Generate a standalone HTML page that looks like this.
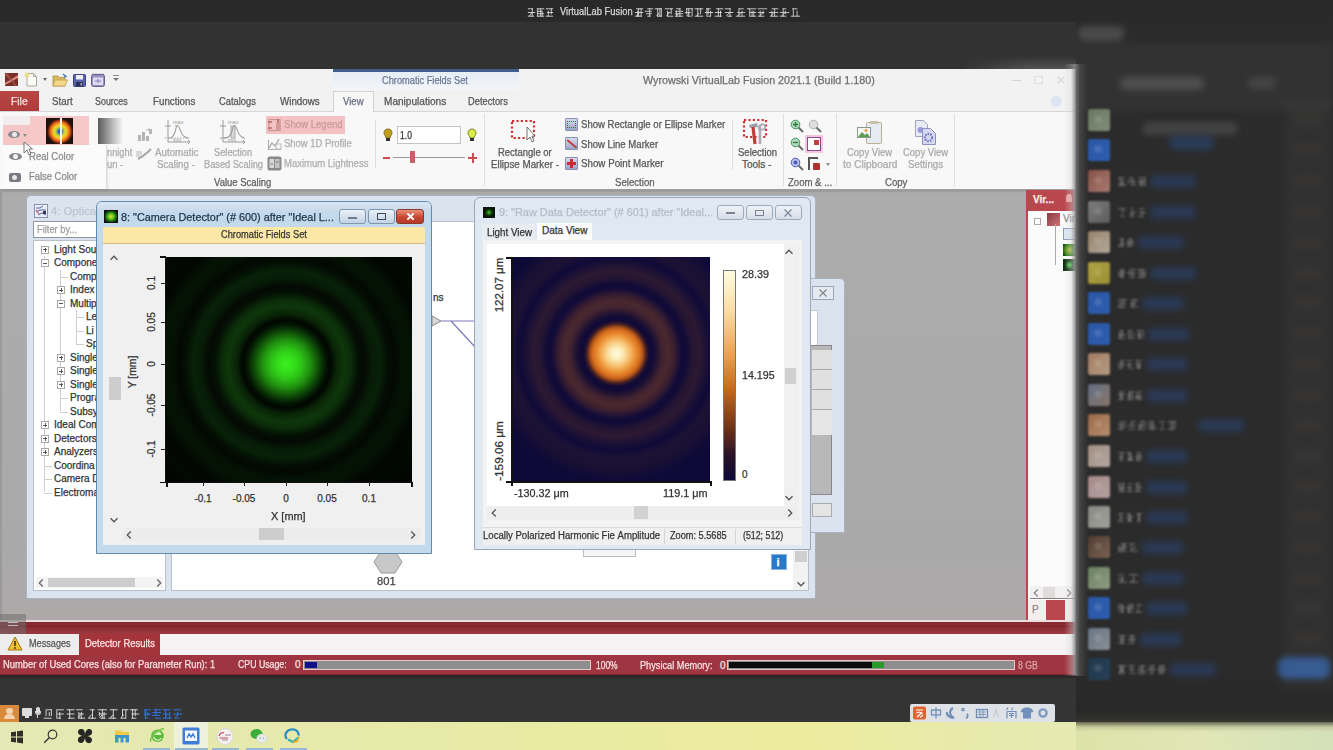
<!DOCTYPE html>
<html><head><meta charset="utf-8">
<style>
*{margin:0;padding:0;box-sizing:border-box}
html,body{width:1333px;height:750px;overflow:hidden;background:#2a2a2a;font-family:"Liberation Sans",sans-serif}
body{position:relative}
.a{position:absolute}
.t{position:absolute;white-space:nowrap;transform-origin:0 50%;-webkit-text-stroke-width:0.25px}
.rot{transform-origin:50% 50%;transform:translate(-50%,-50%) rotate(-90deg)}
</style></head><body>
<div class="a" style="left:0px;top:0px;width:1333px;height:22px;background:#292929"></div>
<div class="a" style="left:0px;top:22px;width:1333px;height:48px;background:#323232"></div>
<svg class="a" style="left:527px;top:7.5px" width="28" height="9" viewBox="0 0 28 9"><path d="M0.8 0.8H6.0M0.8 4.5H8.2M0.8 8.2H7.1M5.3 0.3V8.7M2.3 8.1L4.5 5.0M9.8 0.8H17.2M9.8 3.3H15.0M9.8 5.7H17.2M9.8 8.2H17.2M10.7 0.3V8.7M13.6 0.3V8.7M15.2 2.7V8.7M18.8 0.8H26.2M19.9 4.5H26.2M18.8 8.2H26.2M21.3 2.7V8.7M24.3 0.3V6.3" fill="none" stroke="rgba(225,225,225,0.85)" stroke-width="1.0"/></svg>
<div class="t" style="transform:scaleX(0.936);left:560px;top:6.0px;font-size:10px;line-height:12px;color:#d6d6d6;font-weight:normal;">VirtualLab Fusion</div>
<svg class="a" style="left:634px;top:7.5px" width="101" height="9" viewBox="0 0 101 9"><path d="M2.1 0.8H9.2M0.8 4.5H9.2M0.8 8.2H7.9M3.7 2.7V8.7M4.6 0.3V8.7M7.1 0.3V8.7M2.5 8.1L5.0 5.0M13.3 0.8H19.2M10.8 3.3H17.9M12.1 5.7H17.9M13.3 8.2H16.7M15.7 0.3V8.7M20.8 0.8H27.9M23.3 8.2H27.9M23.7 0.3V8.7M25.9 0.3V8.7M27.3 0.3V8.7M22.5 8.1L25.0 5.0M30.8 0.8H39.2M33.3 4.5H36.7M33.3 8.2H39.2M33.5 2.7V8.7M37.2 0.3V6.3M32.5 8.1L35.0 5.0M42.1 0.8H46.7M40.8 3.3H49.2M40.8 5.7H49.2M40.8 8.2H49.2M42.6 2.7V8.7M45.9 0.3V8.7M42.5 8.1L45.0 5.0M52.1 0.8H59.2M50.8 4.5H56.7M53.3 8.2H56.7M52.7 0.3V6.3M54.8 0.3V8.7M58.1 0.3V8.7M52.5 8.1L55.0 5.0M60.8 0.8H69.2M60.8 8.2H69.2M63.8 0.3V8.7M66.6 0.3V6.3M62.5 8.1L65.0 5.0M72.1 0.8H76.7M70.8 4.5H79.2M73.3 8.2H76.7M72.9 0.3V8.7M74.2 0.3V6.3M76.6 2.7V8.7M82.1 0.8H89.2M80.8 4.5H87.9M80.8 8.2H87.9M84.4 0.3V8.7M86.5 2.7V8.7M90.8 0.8H96.7M90.8 4.5H99.2M93.3 8.2H97.9M96.0 0.3V8.7M92.5 8.1L95.0 5.0" fill="none" stroke="rgba(225,225,225,0.85)" stroke-width="1.0"/></svg>
<svg class="a" style="left:735px;top:7.5px" width="67" height="9" viewBox="0 0 67 9"><path d="M3.6 0.8H8.8M2.2 4.5H10.2M0.8 8.2H10.2M3.9 0.3V8.7M7.0 2.7V8.7M2.7 8.1L5.5 5.0M11.8 0.8H21.2M14.6 4.5H21.2M14.6 8.2H21.2M14.7 0.3V8.7M17.1 2.7V8.7M18.8 2.7V8.7M22.8 0.8H32.2M22.8 4.5H29.4M22.8 8.2H29.4M25.2 2.7V8.7M28.1 2.7V6.3M24.7 8.1L27.5 5.0M36.6 0.8H43.2M33.8 4.5H43.2M35.2 8.2H43.2M36.9 2.7V8.7M39.6 0.3V8.7M35.7 8.1L38.5 5.0M47.6 0.8H51.4M44.8 4.5H54.2M44.8 8.2H51.4M48.2 0.3V8.7M50.3 2.7V6.3M46.7 8.1L49.5 5.0M57.2 0.8H62.4M55.8 8.2H65.2M58.3 0.3V8.7M62.1 2.7V8.7" fill="none" stroke="rgba(225,225,225,0.8)" stroke-width="1.0"/></svg>
<div class="a" style="left:0px;top:69px;width:1076px;height:42px;background:#f2f2f2"></div>
<div class="a" style="left:0px;top:111px;width:1076px;height:1px;background:#d6d6d6"></div>
<div class="a" style="left:0px;top:112px;width:1076px;height:77px;background:#f8f8f8"></div>
<div class="a" style="left:0px;top:189px;width:1076px;height:431px;background:linear-gradient(#adacad,#aaa9aa 85%,#afa9a9)"></div>
<div class="a" style="left:0px;top:189px;width:1076px;height:3px;background:#9c9c9c"></div>
<div class="a" style="left:0px;top:192px;width:1076px;height:2px;background:#a9a9a9"></div>
<div class="a" style="left:0px;top:189px;width:2px;height:431px;background:#9a9a9a"></div>
<svg class="a" style="left:5px;top:73px" width="13" height="13" viewBox="0 0 13 13"><rect width="13" height="13" fill="#7a3028"/><path d="M0 10 C4 8 8 5 13 2 L13 5 C9 7 5 9 0 12 Z" fill="#d89080"/><path d="M2 0 C5 4 8 8 12 13 L10 13 C7 9 4 5 0 2 Z" fill="#b05a4c" opacity="0.8"/></svg>
<svg class="a" style="left:24px;top:72px" width="14" height="15" viewBox="0 0 14 15"><path d="M3 1.5 H9.5 L12.5 4.5 V14 H3 Z" fill="#fdfdf8" stroke="#a8a8a0"/><path d="M9.5 1.5 V4.5 H12.5" fill="none" stroke="#a8a8a0"/><circle cx="3" cy="3" r="2.5" fill="#f0dc80" opacity="0.85"/></svg>
<div class="a" style="left:43px;top:78px;width:0;height:0;border-left:2.5px solid transparent;border-right:2.5px solid transparent;border-top:3px solid #666"></div>
<svg class="a" style="left:52px;top:73px" width="16" height="14" viewBox="0 0 16 14"><path d="M1 3 H6 L7.5 4.5 H13 V13 H1 Z" fill="#d8b860" stroke="#b09040" stroke-width="0.8"/><path d="M3 7 H15.5 L13 13 H1 Z" fill="#f2d888" stroke="#c0a050" stroke-width="0.8"/><path d="M11 1 L14 3.5 L12 4" fill="none" stroke="#3a70b0" stroke-width="1.2"/></svg>
<svg class="a" style="left:73px;top:74px" width="13" height="13" viewBox="0 0 13 13"><rect x="0.5" y="0.5" width="12" height="12" rx="1" fill="#5a62a8" stroke="#3a4080"/><rect x="3" y="1" width="7" height="4.5" fill="#eef0f8"/><rect x="3" y="8" width="7" height="4.5" fill="#2a3060"/><rect x="7.5" y="9" width="1.5" height="2.5" fill="#aab"/></svg>
<svg class="a" style="left:91px;top:73px" width="14" height="14" viewBox="0 0 14 14"><rect x="0.5" y="1.5" width="13" height="12" rx="2" fill="#9890c0" stroke="#6a6090"/><rect x="2" y="4.5" width="10" height="7.5" fill="#dcdcf0"/><path d="M2 2 V0.5 M5 2 V0.5 M9 2 V0.5 M12 2 V0.5" stroke="#6a6090"/><path d="M4 8 H10 M7 6 V10" stroke="#8a80b8" stroke-width="1.2"/></svg>
<div class="a" style="left:113px;top:78px;width:0;height:0;border-left:3px solid transparent;border-right:3px solid transparent;border-top:3px solid #777"></div>
<div class="a" style="left:113px;top:75px;width:6px;height:1px;background:#888"></div>
<div class="a" style="left:333px;top:69px;width:186px;height:21px;background:linear-gradient(#e4ebf4,#f3f6fa)"></div>
<div class="a" style="left:333px;top:69px;width:186px;height:3px;background:#415d8c"></div>
<div class="t" style="transform:scaleX(0.925);left:382px;top:75.0px;font-size:10px;line-height:12px;color:#6a7894;font-weight:normal;">Chromatic Fields Set</div>
<div class="t" style="transform:scaleX(1.022);left:643px;top:73.5px;font-size:10.5px;line-height:13px;color:#6e6e6e;font-weight:normal;">Wyrowski VirtualLab Fusion 2021.1 (Build 1.180)</div>
<div class="a" style="left:1012px;top:80px;width:9px;height:1px;background:#d6d6d6"></div>
<div class="a" style="left:1034px;top:76px;width:9px;height:8px;border:1px solid #dedede"></div>
<svg class="a" style="left:1056px;top:75px" width="10" height="10" viewBox="-5 -5 10 10"><path d="M-3.5 -3.5 L3.5 3.5 M3.5 -3.5 L-3.5 3.5" stroke="#d8d8d8" stroke-width="1.1"/></svg>
<div class="a" style="left:1051px;top:96px;width:11px;height:11px;border-radius:50%;background:#dde5f2"></div>
<div class="a" style="left:0px;top:91px;width:39px;height:20px;background:linear-gradient(#b84644,#ae3c3b)"></div>
<div class="t" style="transform:scaleX(1.031);left:11px;top:95.5px;font-size:10px;line-height:12px;color:#fbe0e0;font-weight:normal;">File</div>
<div class="t" style="transform:scaleX(0.976);left:52px;top:95.5px;font-size:10px;line-height:12px;color:#555;font-weight:normal;">Start</div>
<div class="t" style="transform:scaleX(0.892);left:95px;top:95.5px;font-size:10px;line-height:12px;color:#555;font-weight:normal;">Sources</div>
<div class="t" style="transform:scaleX(0.977);left:152.5px;top:95.5px;font-size:10px;line-height:12px;color:#555;font-weight:normal;">Functions</div>
<div class="t" style="transform:scaleX(0.936);left:219px;top:95.5px;font-size:10px;line-height:12px;color:#555;font-weight:normal;">Catalogs</div>
<div class="t" style="transform:scaleX(0.976);left:280px;top:95.5px;font-size:10px;line-height:12px;color:#555;font-weight:normal;">Windows</div>
<div class="a" style="left:333px;top:91px;width:41px;height:21px;background:#f8f8f8;border:1px solid #d2d2d2;border-bottom:none"></div>
<div class="t" style="transform:scaleX(0.955);left:342.5px;top:95.5px;font-size:10px;line-height:12px;color:#6a6f86;font-weight:normal;">View</div>
<div class="t" style="transform:scaleX(1.008);left:384px;top:95.5px;font-size:10px;line-height:12px;color:#555;font-weight:normal;">Manipulations</div>
<div class="t" style="transform:scaleX(0.930);left:467.5px;top:95.5px;font-size:10px;line-height:12px;color:#555;font-weight:normal;">Detectors</div>
<div class="a" style="left:375px;top:120px;width:1px;height:48px;background:#dedede"></div>
<div class="a" style="left:484px;top:114px;width:1px;height:72px;background:#dedede"></div>
<div class="a" style="left:732px;top:120px;width:1px;height:50px;background:#dedede"></div>
<div class="a" style="left:783px;top:114px;width:1px;height:72px;background:#dedede"></div>
<div class="a" style="left:836px;top:114px;width:1px;height:72px;background:#dedede"></div>
<div class="a" style="left:954px;top:114px;width:1px;height:72px;background:#dedede"></div>
<div class="a" style="left:3px;top:116px;width:27px;height:9px;background:#f3eded"></div>
<div class="a" style="left:3px;top:125px;width:27px;height:20px;background:#f5c6c6"></div>
<div class="a" style="left:30px;top:116px;width:59px;height:29px;background:#f6c9c9"></div>
<div class="a" style="left:8px;top:131px;width:12px;height:7px;border-radius:50%;background:#8a8a92"></div>
<div class="a" style="left:12px;top:132px;width:5px;height:5px;border-radius:50%;background:#f0e8ec"></div>
<div class="a" style="left:23px;top:134px;width:0;height:0;border-left:2.5px solid transparent;border-right:2.5px solid transparent;border-top:3px solid #888"></div>
<div class="a" style="left:46px;top:118px;width:27px;height:26px;background:radial-gradient(circle at 14px 13.5px,#2838a8 0,#3a70c0 2px,#a8cc48 4px,#f0d828 6px,#f4a020 8px,#d85a14 10px,#7a2810 11.5px,#1e1210 13px)"><div class="a" style="left:14px;top:0;width:1.5px;height:26px;background:#f4f0ee"></div></div>
<div class="a" style="left:3px;top:145px;width:104px;height:44px;background:#fbfbfb;border-right:1px solid #dcdcdc;box-shadow:1px 1px 2px rgba(0,0,0,0.08)"></div>
<div class="a" style="left:9px;top:153px;width:13px;height:7px;border-radius:50%;background:#85858d"></div>
<div class="a" style="left:13px;top:154px;width:5px;height:5px;border-radius:50%;background:#f3f3f3"></div>
<div class="t" style="transform:scaleX(0.957);left:29px;top:150.5px;font-size:10px;line-height:12px;color:#8a8a8a;font-weight:normal;">Real Color</div>
<div class="a" style="left:9px;top:173px;width:12px;height:9px;background:#7a7a84;border-radius:2px"></div>
<div class="a" style="left:12px;top:175px;width:5px;height:5px;border-radius:50%;background:#e8e8e8"></div>
<div class="t" style="transform:scaleX(0.941);left:29px;top:170.8px;font-size:10px;line-height:12px;color:#8a8a8a;font-weight:normal;">False Color</div>
<svg class="a" style="left:23px;top:141px" width="10" height="15" viewBox="0 0 10 15"><path d="M1 1 L1 12 L4 9 L6 14 L8 13 L6 8 L9.5 8 Z" fill="#fff" stroke="#555" stroke-width="0.8"/></svg>
<div class="a" style="left:98px;top:118px;width:24px;height:26px;background:linear-gradient(90deg,#5a5a5a,#c8c8c8 70%,#f0f0f0)"></div>
<div class="t" style="transform:scaleX(0.926);left:107px;top:146.5px;font-size:10px;line-height:12px;color:#aaa;font-weight:normal;">nnight</div>
<div class="t" style="transform:scaleX(0.941);left:107px;top:159.0px;font-size:10px;line-height:12px;color:#aaa;font-weight:normal;">un -</div>
<svg class="a" style="left:137px;top:127px" width="16" height="15" viewBox="0 0 16 15"><g fill="#b4b4b4"><rect x="1" y="8" width="3" height="6"/><rect x="5" y="5" width="3" height="9"/><rect x="9" y="9" width="3" height="5"/><rect x="12" y="2" width="3" height="5"/></g><path d="M9 3 H12 M12 1 V4" stroke="#bbb"/></svg>
<svg class="a" style="left:136px;top:148px" width="17" height="13" viewBox="0 0 17 13"><path d="M2 11 C6 9 11 5 15 1" stroke="#aaa" stroke-width="2.2" fill="none"/><path d="M1 3 V9 M3 3 V9 M5 3 V7" stroke="#bbb" stroke-width="1"/></svg>
<svg class="a" style="left:163px;top:117px" width="30" height="28" viewBox="0 0 30 28"><g stroke="#9c9c9c" fill="none" stroke-width="1"><path d="M5 3 V25 H27"/><path d="M25 23 L27 25 L25 27"/><path d="M2 9 H8 M12 9 H14" /><path d="M2 21 H26" stroke-dasharray="1.5 1.5"/><path d="M6 21 C9 21 10 20 12 15 C13 11 13.5 8.5 14.5 8.5 C16 8.5 17 13 19 17 C21 20 23 21 26 21" stroke-width="1.1"/></g><text x="10" y="6.5" font-size="5.5" fill="#9a9a9a" font-family="Liberation Sans">max</text><text x="10" y="25" font-size="5" fill="#9a9a9a" font-family="Liberation Sans">min</text></svg>
<div class="t" style="transform:scaleX(0.977);left:155px;top:146.5px;font-size:10px;line-height:12px;color:#a9a9a9;font-weight:normal;">Automatic</div>
<div class="t" style="transform:scaleX(0.974);left:157px;top:159.0px;font-size:10px;line-height:12px;color:#a9a9a9;font-weight:normal;">Scaling -</div>
<svg class="a" style="left:218px;top:117px" width="30" height="28" viewBox="0 0 30 28"><g stroke="#9c9c9c" fill="none" stroke-width="1"><path d="M5 3 V25 H27"/><path d="M25 23 L27 25 L25 27"/><path d="M2 9 H8"/><path d="M2 21 H8"/><rect x="13" y="9" width="4" height="12" fill="#d8d8d8" stroke="#aaa"/><path d="M6 21 C10 21 12 20 14 14 C15 10 15.5 8.5 16.5 8.5 C18 8.5 19 13 21 17 C23 20 24 21 27 21" stroke-width="1.1"/></g><text x="10" y="6.5" font-size="5.5" fill="#9a9a9a" font-family="Liberation Sans">max</text><text x="10" y="25" font-size="5" fill="#9a9a9a" font-family="Liberation Sans">min</text></svg>
<div class="t" style="transform:scaleX(0.927);left:214px;top:146.5px;font-size:10px;line-height:12px;color:#a9a9a9;font-weight:normal;">Selection</div>
<div class="t" style="transform:scaleX(0.922);left:204px;top:159.0px;font-size:10px;line-height:12px;color:#a9a9a9;font-weight:normal;">Based Scaling</div>
<div class="t" style="transform:scaleX(0.950);left:214px;top:176.5px;font-size:10px;line-height:12px;color:#606060;font-weight:normal;">Value Scaling</div>
<div class="a" style="left:266px;top:116px;width:79px;height:18px;background:#f4c2c2"></div>
<svg class="a" style="left:267px;top:118px" width="15" height="14" viewBox="0 0 15 14"><rect x="2" y="1.5" width="11" height="11" fill="none" stroke="#c89898" stroke-width="1.2"/><path d="M1 4 H5 M1 10 H5 M11 1 V5" stroke="#b86868" stroke-width="1.6"/><rect x="9" y="5" width="4.5" height="7" fill="#d89a9a"/></svg>
<div class="t" style="transform:scaleX(0.959);left:284px;top:119.3px;font-size:10px;line-height:12px;color:#c99a9a;font-weight:normal;">Show Legend</div>
<svg class="a" style="left:267px;top:137px" width="15" height="14" viewBox="0 0 15 14"><path d="M1.5 3 V12.5 H14" fill="none" stroke="#b0b0b0" stroke-width="1.2"/><path d="M2 11 L5 6 L8 9 L12 2" fill="none" stroke="#a8a8a8" stroke-width="1.3"/><rect x="9" y="7" width="5" height="5" fill="none" stroke="#bbb"/></svg>
<div class="t" style="transform:scaleX(0.944);left:284px;top:138.2px;font-size:10px;line-height:12px;color:#adadad;font-weight:normal;">Show 1D Profile</div>
<svg class="a" style="left:267px;top:156px" width="15" height="15" viewBox="0 0 15 15"><rect x="0.5" y="0.5" width="14" height="14" rx="2" fill="#8a8a8a"/><rect x="2.5" y="3" width="4.5" height="9" fill="#d8d8d8"/><rect x="8" y="3" width="4.5" height="9" fill="#c4c4c4"/><path d="M3.5 8 H6 M9 6 H11.5" stroke="#777"/></svg>
<div class="t" style="transform:scaleX(0.949);left:284px;top:157.7px;font-size:10px;line-height:12px;color:#adadad;font-weight:normal;">Maximum Lightness</div>
<svg class="a" style="left:383px;top:128px" width="10" height="14" viewBox="0 0 10 14"><path d="M5 1 C2 1 1 3 1 5 C1 7 3 8 3 10 H7 C7 8 9 7 9 5 C9 3 8 1 5 1 Z" fill="#c0a018" stroke="#6a5a10" stroke-width="0.8"/><rect x="3" y="10" width="4" height="3" fill="#333"/></svg>
<div class="a" style="left:397px;top:126px;width:64px;height:18px;background:#fff;border:1px solid #c4c4c4"></div>
<div class="t" style="transform:scaleX(0.857);left:400px;top:129.5px;font-size:10px;line-height:12px;color:#333;font-weight:normal;">1.0</div>
<svg class="a" style="left:467px;top:128px" width="10" height="14" viewBox="0 0 10 14"><path d="M5 1 C2 1 1 3 1 5 C1 7 3 8 3 10 H7 C7 8 9 7 9 5 C9 3 8 1 5 1 Z" fill="#e0ec48" stroke="#5a6a10" stroke-width="0.8"/><rect x="3" y="10" width="4" height="3" fill="#333"/></svg>
<div class="a" style="left:383px;top:157px;width:7px;height:2px;background:#d04a50"></div>
<div class="a" style="left:393px;top:157px;width:72px;height:1px;background:#999"></div>
<div class="a" style="left:410px;top:151px;width:5px;height:12px;background:#c6606a"></div>
<div class="a" style="left:468px;top:157px;width:9px;height:2px;background:#d04a50"></div>
<div class="a" style="left:471.5px;top:153px;width:2px;height:10px;background:#d04a50"></div>
<svg class="a" style="left:510px;top:119px" width="28" height="24" viewBox="0 0 28 24"><rect x="2" y="2" width="22" height="17" fill="none" stroke="#d03030" stroke-width="2.2" stroke-dasharray="2.2 2.2"/><path d="M17 8 L17 21 L20 18 L22 23 L24 22 L22 17 L25 17 Z" fill="#fff" stroke="#555" stroke-width="0.8"/></svg>
<div class="t" style="transform:scaleX(0.947);left:498px;top:146.5px;font-size:10px;line-height:12px;color:#555;font-weight:normal;">Rectangle or</div>
<div class="t" style="transform:scaleX(0.978);left:491px;top:158.6px;font-size:10px;line-height:12px;color:#555;font-weight:normal;">Ellipse Marker -</div>
<div class="a" style="left:565px;top:118px;width:13px;height:13px;background:linear-gradient(#d6dcf0,#9aa4c8);border:1px solid #8890b0;border-radius:1px"></div>
<div class="a" style="left:565px;top:137px;width:13px;height:13px;background:linear-gradient(#d6dcf0,#9aa4c8);border:1px solid #8890b0;border-radius:1px"></div>
<div class="a" style="left:565px;top:157px;width:13px;height:13px;background:linear-gradient(#d6dcf0,#9aa4c8);border:1px solid #8890b0;border-radius:1px"></div>
<div class="a" style="left:567px;top:121px;width:9px;height:7px;border:1.5px dotted #c03030"></div>
<div class="a" style="left:566px;top:143px;width:12px;height:1.5px;background:#c04040;transform:rotate(40deg)"></div>
<div class="a" style="left:570px;top:159px;width:3px;height:9px;background:#c03030"></div>
<div class="a" style="left:567px;top:162px;width:9px;height:3px;background:#c03030"></div>
<div class="t" style="transform:scaleX(0.957);left:580.5px;top:119.0px;font-size:10px;line-height:12px;color:#555;font-weight:normal;">Show Rectangle or Ellipse Marker</div>
<div class="t" style="transform:scaleX(0.957);left:580.5px;top:138.7px;font-size:10px;line-height:12px;color:#555;font-weight:normal;">Show Line Marker</div>
<div class="t" style="transform:scaleX(0.976);left:580.5px;top:158.0px;font-size:10px;line-height:12px;color:#555;font-weight:normal;">Show Point Marker</div>
<div class="t" style="transform:scaleX(0.963);left:615px;top:176.5px;font-size:10px;line-height:12px;color:#606060;font-weight:normal;">Selection</div>
<svg class="a" style="left:742px;top:118px" width="28" height="28" viewBox="0 0 28 28"><rect x="2" y="2" width="22" height="17" fill="none" stroke="#d03030" stroke-width="2.2" stroke-dasharray="2.2 2.2"/><path d="M7 7 L15 5 L16 9 L8 10 Z" fill="#9aa0aa"/><path d="M11 9 L13 26" stroke="#c83a3a" stroke-width="3.2"/><path d="M20 7 C17 7 16 10 18 12 L18 26" fill="none" stroke="#a8aeb8" stroke-width="2.6"/><circle cx="20.5" cy="9" r="2.6" fill="none" stroke="#a8aeb8" stroke-width="1.6"/></svg>
<div class="t" style="transform:scaleX(0.951);left:738px;top:146.5px;font-size:10px;line-height:12px;color:#555;font-weight:normal;">Selection</div>
<div class="t" style="transform:scaleX(1.000);left:742px;top:159.0px;font-size:10px;line-height:12px;color:#555;font-weight:normal;">Tools -</div>
<svg class="a" style="left:790px;top:119px" width="14" height="14" viewBox="0 0 14 14"><circle cx="5.5" cy="5.5" r="4.3" fill="#3a9a5a" stroke="#3a9a5a" stroke-width="1" fill-opacity="0.35"/><path d="M8.5 8.5 L13 13" stroke="#6a6a6a" stroke-width="2"/><path d="M3 5.5 H8 M5.5 3 V8" stroke="#2a7a3a" stroke-width="1.3"/></svg>
<svg class="a" style="left:808px;top:119px" width="14" height="14" viewBox="0 0 14 14"><circle cx="5.5" cy="5.5" r="4.3" fill="#b0b0b0" stroke="#b0b0b0" stroke-width="1" fill-opacity="0.35"/><path d="M8.5 8.5 L13 13" stroke="#6a6a6a" stroke-width="2"/></svg>
<svg class="a" style="left:790px;top:137px" width="14" height="14" viewBox="0 0 14 14"><circle cx="5.5" cy="5.5" r="4.3" fill="#3a9a5a" stroke="#3a9a5a" stroke-width="1" fill-opacity="0.35"/><path d="M8.5 8.5 L13 13" stroke="#6a6a6a" stroke-width="2"/><path d="M3 5.5 H8" stroke="#2a7a3a" stroke-width="1.3"/></svg>
<div class="a" style="left:805px;top:135px;width:18px;height:18px;background:#f0c8e0"></div>
<div class="a" style="left:807px;top:137px;width:14px;height:14px;border:1.5px solid #8a4a8a;background:#fff"></div>
<div class="a" style="left:814px;top:140px;width:5px;height:5px;background:#c04040"></div>
<svg class="a" style="left:790px;top:157px" width="14" height="14" viewBox="0 0 14 14"><circle cx="5.5" cy="5.5" r="4.3" fill="#4a5ac0" stroke="#4a5ac0" stroke-width="1" fill-opacity="0.35"/><path d="M8.5 8.5 L13 13" stroke="#6a6a6a" stroke-width="2"/><circle cx="5.5" cy="5.5" r="2" fill="#4a5ac0"/></svg>
<div class="a" style="left:808px;top:157px;width:10px;height:13px;border-left:2px solid #555;border-top:2px solid #555"></div>
<div class="a" style="left:813px;top:163px;width:7px;height:7px;background:#b03030;border-radius:1px"></div>
<div class="a" style="left:826px;top:163px;width:0;height:0;border-left:2.5px solid transparent;border-right:2.5px solid transparent;border-top:3px solid #888"></div>
<div class="t" style="transform:scaleX(0.957);left:788px;top:176.7px;font-size:10px;line-height:12px;color:#606060;font-weight:normal;">Zoom &amp; ...</div>
<svg class="a" style="left:857px;top:120px" width="26" height="25" viewBox="0 0 26 25"><rect x="9.5" y="2.5" width="15" height="21" rx="1" fill="#e6eaf2" stroke="#b8ae90"/><rect x="13" y="1" width="8" height="3" fill="#c8c0a8"/><rect x="0.5" y="7.5" width="13" height="10" fill="#f4f4f4" stroke="#8a9a8a"/><path d="M1 17 L5 12 L8 15 L10 13 L13 17 Z" fill="#5aa050"/><circle cx="9" cy="10.5" r="1.5" fill="#e8a040"/></svg>
<div class="t" style="transform:scaleX(0.948);left:847px;top:146.5px;font-size:10px;line-height:12px;color:#a9a9a9;font-weight:normal;">Copy View</div>
<div class="t" style="transform:scaleX(1.009);left:843px;top:159.0px;font-size:10px;line-height:12px;color:#a9a9a9;font-weight:normal;">to Clipboard</div>
<svg class="a" style="left:914px;top:119px" width="26" height="27" viewBox="0 0 26 27"><path d="M1.5 1.5 H9.5 L13.5 5.5 V17.5 H1.5 Z" fill="#e8eaf4" stroke="#a0a4c0"/><circle cx="6.5" cy="11" r="3" fill="#9a9ad8"/><path d="M8.5 9.5 H16.5 L21.5 14.5 V25.5 H8.5 Z" fill="#d6d8f0" stroke="#8a90c0"/><circle cx="14.5" cy="18.5" r="3.6" fill="none" stroke="#7878c8" stroke-width="2.2" stroke-dasharray="1.6 1"/></svg>
<div class="t" style="transform:scaleX(0.948);left:902.5px;top:146.5px;font-size:10px;line-height:12px;color:#a9a9a9;font-weight:normal;">Copy View</div>
<div class="t" style="transform:scaleX(0.972);left:908px;top:159.0px;font-size:10px;line-height:12px;color:#a9a9a9;font-weight:normal;">Settings</div>
<div class="t" style="transform:scaleX(0.957);left:885px;top:177.0px;font-size:10px;line-height:12px;color:#606060;font-weight:normal;">Copy</div>
<div class="a" style="left:26px;top:195px;width:790px;height:404px;background:#dbe4ee;border:1px solid #a8b3c2;border-radius:5px 5px 0 0"></div>
<svg class="a" style="left:34px;top:204px" width="14" height="14" viewBox="0 0 14 14"><rect x="0.5" y="0.5" width="13" height="13" fill="#eef0f8" stroke="#8890b8"/><path d="M2 4 H6 L9 2 M2 8 L6 6 H12 M4 11 L8 9 L12 11" stroke="#5060a8" stroke-width="1" fill="none"/><path d="M2 6 L5 10" stroke="#d06070" stroke-width="1.2"/><rect x="9" y="7" width="3" height="3" fill="#303860"/></svg>
<div class="t" style="transform:scaleX(1.023);left:51px;top:204.5px;font-size:11px;line-height:13px;color:#bcc6d2;font-weight:normal;">4: Optica</div>
<div class="a" style="left:33px;top:221px;width:133px;height:17px;background:#fff;border:1px solid #8f969e"></div>
<div class="t" style="transform:scaleX(0.930);left:37px;top:223.5px;font-size:10px;line-height:12px;color:#a0a0a0;font-weight:normal;">Filter by...</div>
<div class="a" style="left:33px;top:240px;width:133px;height:351px;background:#fff;border:1px solid #b8c0ca"></div>
<div class="a" style="left:44px;top:256px;width:1px;height:236px;background:#cfcfcf"></div>
<div class="a" style="left:60px;top:270px;width:1px;height:141px;background:#cfcfcf"></div>
<div class="a" style="left:76px;top:310px;width:1px;height:34px;background:#cfcfcf"></div>
<div class="a" style="left:41px;top:245.6px;width:8px;height:8px;background:#fff;border:1px solid #a8a8a8"></div>
<div class="a" style="left:43px;top:249.1px;width:4px;height:1px;background:#555"></div>
<div class="a" style="left:44.5px;top:247.6px;width:1px;height:4px;background:#555"></div>
<div class="t" style="left:54px;top:243.6px;font-size:10px;line-height:12px;color:#333;font-weight:normal;">Light Sou</div>
<div class="a" style="left:41px;top:259.1px;width:8px;height:8px;background:#fff;border:1px solid #a8a8a8"></div>
<div class="a" style="left:43px;top:262.6px;width:4px;height:1px;background:#555"></div>
<div class="t" style="left:54px;top:257.1px;font-size:10px;line-height:12px;color:#333;font-weight:normal;">Compone</div>
<div class="a" style="left:60px;top:276.6px;width:8px;height:1px;background:#cfcfcf"></div>
<div class="t" style="left:70px;top:270.6px;font-size:10px;line-height:12px;color:#333;font-weight:normal;">Comp</div>
<div class="a" style="left:57px;top:286.1px;width:8px;height:8px;background:#fff;border:1px solid #a8a8a8"></div>
<div class="a" style="left:59px;top:289.6px;width:4px;height:1px;background:#555"></div>
<div class="a" style="left:60.5px;top:288.1px;width:1px;height:4px;background:#555"></div>
<div class="t" style="left:70px;top:284.1px;font-size:10px;line-height:12px;color:#333;font-weight:normal;">Index</div>
<div class="a" style="left:57px;top:299.6px;width:8px;height:8px;background:#fff;border:1px solid #a8a8a8"></div>
<div class="a" style="left:59px;top:303.1px;width:4px;height:1px;background:#555"></div>
<div class="t" style="left:70px;top:297.6px;font-size:10px;line-height:12px;color:#333;font-weight:normal;">Multip</div>
<div class="a" style="left:76px;top:317.1px;width:8px;height:1px;background:#cfcfcf"></div>
<div class="t" style="left:86px;top:311.1px;font-size:10px;line-height:12px;color:#333;font-weight:normal;">Le</div>
<div class="a" style="left:76px;top:330.6px;width:8px;height:1px;background:#cfcfcf"></div>
<div class="t" style="left:86px;top:324.6px;font-size:10px;line-height:12px;color:#333;font-weight:normal;">Li</div>
<div class="a" style="left:76px;top:344.1px;width:8px;height:1px;background:#cfcfcf"></div>
<div class="t" style="left:86px;top:338.1px;font-size:10px;line-height:12px;color:#333;font-weight:normal;">Sp</div>
<div class="a" style="left:57px;top:353.6px;width:8px;height:8px;background:#fff;border:1px solid #a8a8a8"></div>
<div class="a" style="left:59px;top:357.1px;width:4px;height:1px;background:#555"></div>
<div class="a" style="left:60.5px;top:355.6px;width:1px;height:4px;background:#555"></div>
<div class="t" style="left:70px;top:351.6px;font-size:10px;line-height:12px;color:#333;font-weight:normal;">Single</div>
<div class="a" style="left:57px;top:367.1px;width:8px;height:8px;background:#fff;border:1px solid #a8a8a8"></div>
<div class="a" style="left:59px;top:370.6px;width:4px;height:1px;background:#555"></div>
<div class="a" style="left:60.5px;top:369.1px;width:1px;height:4px;background:#555"></div>
<div class="t" style="left:70px;top:365.1px;font-size:10px;line-height:12px;color:#333;font-weight:normal;">Single</div>
<div class="a" style="left:57px;top:380.6px;width:8px;height:8px;background:#fff;border:1px solid #a8a8a8"></div>
<div class="a" style="left:59px;top:384.1px;width:4px;height:1px;background:#555"></div>
<div class="a" style="left:60.5px;top:382.6px;width:1px;height:4px;background:#555"></div>
<div class="t" style="left:70px;top:378.6px;font-size:10px;line-height:12px;color:#333;font-weight:normal;">Single</div>
<div class="a" style="left:60px;top:398.1px;width:8px;height:1px;background:#cfcfcf"></div>
<div class="t" style="left:70px;top:392.1px;font-size:10px;line-height:12px;color:#333;font-weight:normal;">Progra</div>
<div class="a" style="left:60px;top:411.6px;width:8px;height:1px;background:#cfcfcf"></div>
<div class="t" style="left:70px;top:405.6px;font-size:10px;line-height:12px;color:#333;font-weight:normal;">Subsy</div>
<div class="a" style="left:41px;top:421.1px;width:8px;height:8px;background:#fff;border:1px solid #a8a8a8"></div>
<div class="a" style="left:43px;top:424.6px;width:4px;height:1px;background:#555"></div>
<div class="a" style="left:44.5px;top:423.1px;width:1px;height:4px;background:#555"></div>
<div class="t" style="left:54px;top:419.1px;font-size:10px;line-height:12px;color:#333;font-weight:normal;">Ideal Com</div>
<div class="a" style="left:41px;top:434.6px;width:8px;height:8px;background:#fff;border:1px solid #a8a8a8"></div>
<div class="a" style="left:43px;top:438.1px;width:4px;height:1px;background:#555"></div>
<div class="a" style="left:44.5px;top:436.6px;width:1px;height:4px;background:#555"></div>
<div class="t" style="left:54px;top:432.6px;font-size:10px;line-height:12px;color:#333;font-weight:normal;">Detectors</div>
<div class="a" style="left:41px;top:448.1px;width:8px;height:8px;background:#fff;border:1px solid #a8a8a8"></div>
<div class="a" style="left:43px;top:451.6px;width:4px;height:1px;background:#555"></div>
<div class="a" style="left:44.5px;top:450.1px;width:1px;height:4px;background:#555"></div>
<div class="t" style="left:54px;top:446.1px;font-size:10px;line-height:12px;color:#333;font-weight:normal;">Analyzers</div>
<div class="a" style="left:44px;top:465.6px;width:8px;height:1px;background:#cfcfcf"></div>
<div class="t" style="left:54px;top:459.6px;font-size:10px;line-height:12px;color:#333;font-weight:normal;">Coordina</div>
<div class="a" style="left:44px;top:479.1px;width:8px;height:1px;background:#cfcfcf"></div>
<div class="t" style="left:54px;top:473.1px;font-size:10px;line-height:12px;color:#333;font-weight:normal;">Camera D</div>
<div class="a" style="left:44px;top:492.6px;width:8px;height:1px;background:#cfcfcf"></div>
<div class="t" style="left:54px;top:486.6px;font-size:10px;line-height:12px;color:#333;font-weight:normal;">Electroma</div>
<div class="a" style="left:36px;top:577px;width:127px;height:11px;background:#f4f4f4"></div>
<div class="a" style="left:48px;top:578px;width:87px;height:9px;background:#cdcdcd"></div>
<svg class="a" style="left:35px;top:576.5px" width="12" height="12" viewBox="-6 -6 12 12"><path d="M1.75 -3.5 L-1.75 0 L1.75 3.5" fill="none" stroke="#666" stroke-width="1.3"/></svg>
<svg class="a" style="left:152.5px;top:576.5px" width="12" height="12" viewBox="-6 -6 12 12"><path d="M-1.75 -3.5 L1.75 0 L-1.75 3.5" fill="none" stroke="#666" stroke-width="1.3"/></svg>
<div class="a" style="left:171px;top:221px;width:638px;height:370px;background:#fff;border:1px solid #b8c0ca"></div>
<div class="a" style="left:793px;top:222px;width:15px;height:368px;background:#f2f2f2"></div>
<div class="a" style="left:795px;top:551px;width:12px;height:11px;background:#cfcfcf"></div>
<svg class="a" style="left:794.5px;top:578px" width="12" height="12" viewBox="-6 -6 12 12"><path d="M-3.5 -1.75 L0 1.75 L3.5 -1.75" fill="none" stroke="#555" stroke-width="1.3"/></svg>
<div class="a" style="left:771px;top:554px;width:16px;height:16px;background:#2a78c8;border:1px solid #8ab0e0"></div>
<div class="t" style="left:776.5px;top:555.5px;font-size:11px;line-height:13px;color:#fff;font-weight:bold;">i</div>
<svg class="a" style="left:373px;top:550px" width="30" height="24" viewBox="0 0 30 24"><path d="M8 1 H22 L29 12 L22 23 H8 L1 12 Z" fill="#c8c8c8" stroke="#9a9a9a"/></svg>
<div class="t" style="transform:scaleX(1.118);left:377px;top:575.5px;font-size:10px;line-height:12px;color:#444;font-weight:normal;">801</div>
<div class="a" style="left:583px;top:548px;width:53px;height:9px;background:#f6f6f6;border:1px solid #bdbdbd"></div>
<div class="t" style="left:433px;top:292.0px;font-size:10px;line-height:12px;color:#333;font-weight:normal;">ns</div>
<svg class="a" style="left:430px;top:312px" width="46" height="38" viewBox="0 0 46 38"><path d="M2 4 L11 9 L2 14 Z" fill="#d8d8d8" stroke="#8a8a8a" stroke-width="1"/><path d="M11 9 H45 M21 9 L45 35" stroke="#7c78c0" stroke-width="1.2" fill="none"/></svg>
<div class="a" style="left:805px;top:278px;width:40px;height:255px;background:#dbe4ee;border:1px solid #a8b3c2;border-radius:0 5px 0 0"></div>
<div class="a" style="left:812px;top:286px;width:22px;height:14px;background:#e4eaf2;border:1px solid #9aa8b8"></div>
<svg class="a" style="left:818px;top:288px" width="10" height="10" viewBox="-5 -5 10 10"><path d="M-3.5 -3.5 L3.5 3.5 M3.5 -3.5 L-3.5 3.5" stroke="#888" stroke-width="1.3"/></svg>
<div class="a" style="left:810px;top:310px;width:8px;height:60px;background:#fff;border:1px solid #c0c8d0"></div>
<div class="a" style="left:810px;top:345px;width:22px;height:150px;background:#b8b8b8;border:1px solid #888"></div>
<div class="a" style="left:812px;top:350px;width:20px;height:20px;background:#e0e0e0;border-bottom:1px solid #aaa"></div>
<div class="a" style="left:812px;top:370px;width:20px;height:20px;background:#e0e0e0;border-bottom:1px solid #aaa"></div>
<div class="a" style="left:812px;top:390px;width:20px;height:20px;background:#e0e0e0;border-bottom:1px solid #aaa"></div>
<div class="a" style="left:812px;top:410px;width:20px;height:25px;background:#e6e6e6"></div>
<div class="a" style="left:812px;top:503px;width:20px;height:14px;background:#e4e4e4;border:1px solid #aaa"></div>
<div class="a" style="left:1026px;top:190px;width:50px;height:430px;background:#b9474d"></div>
<div class="t" style="left:1033px;top:194.0px;font-size:10px;line-height:12px;color:#fbe8e8;font-weight:bold;">Vir...</div>
<div class="a" style="left:1066px;top:194px;width:6px;height:8px;background:#e8a0a0;border-radius:50% 50% 0 0"></div>
<div class="a" style="left:1028px;top:211px;width:48px;height:389px;background:#fbfbfb"></div>
<div class="a" style="left:1034px;top:218px;width:7px;height:7px;border:1px solid #aaa"></div>
<div class="a" style="left:1047px;top:213px;width:13px;height:13px;background:linear-gradient(135deg,#8a3a40,#d07078)"></div>
<div class="t" style="left:1063px;top:213.0px;font-size:10px;line-height:12px;color:#888;font-weight:normal;">Vir</div>
<div class="a" style="left:1055px;top:224px;width:1px;height:41px;border-left:1px solid #aaa"></div>
<div class="a" style="left:1063px;top:228px;width:13px;height:12px;background:#dde6f2;border:1px solid #8898b8"></div>
<div class="a" style="left:1063px;top:244px;width:13px;height:12px;background:radial-gradient(circle,#b0c030,#207010 70%,#103010)"></div>
<div class="a" style="left:1063px;top:259px;width:13px;height:12px;background:radial-gradient(circle,#40c040 10%,#103010 50%)"></div>
<div class="a" style="left:1028px;top:600px;width:48px;height:20px;background:#f4eeee"></div>
<div class="t" style="left:1032px;top:604.0px;font-size:10px;line-height:12px;color:#888;font-weight:normal;">P</div>
<div class="a" style="left:1046px;top:600px;width:19px;height:20px;background:#b8464c"></div>
<div class="a" style="left:1030px;top:586px;width:46px;height:13px;background:#f2f0f0;border-bottom:1px solid #8a8080"></div>
<div class="a" style="left:1043px;top:587px;width:12px;height:11px;background:#e0dcdc"></div>
<svg class="a" style="left:1030px;top:587px" width="12" height="12" viewBox="-6 -6 12 12"><path d="M1.75 -3.5 L-1.75 0 L1.75 3.5" fill="none" stroke="#888" stroke-width="1.3"/></svg>
<svg class="a" style="left:1063px;top:587px" width="12" height="12" viewBox="-6 -6 12 12"><path d="M-1.75 -3.5 L1.75 0 L-1.75 3.5" fill="none" stroke="#888" stroke-width="1.3"/></svg>
<div class="a" style="left:96px;top:201px;width:336px;height:353px;background:#c3d9ec;border:1px solid #5f8cae;border-radius:6px 6px 0 0"></div>
<div class="a" style="left:97px;top:202px;width:334px;height:10px;background:linear-gradient(#dae6f2,#c7d8ea);border-radius:5px 5px 0 0"></div>
<div class="a" style="left:104px;top:210px;width:14px;height:13px;background:radial-gradient(ellipse at 50% 50%,#e8e030 0,#60c020 35%,#208010 55%,#0a1a08 85%);border:1px solid #111"></div>
<div class="t" style="transform:scaleX(0.986);left:121px;top:210.5px;font-size:11px;line-height:13px;color:#24364c;font-weight:normal;">8: "Camera Detector" (# 600) after "Ideal L...</div>
<div class="a" style="left:339px;top:209px;width:27px;height:15px;background:linear-gradient(#eaf1f8,#c4d3e3);border:1px solid #7f96b0;border-radius:3px"></div>
<div class="a" style="left:368px;top:209px;width:27px;height:15px;background:linear-gradient(#eaf1f8,#c4d3e3);border:1px solid #7f96b0;border-radius:3px"></div>
<div class="a" style="left:348px;top:217px;width:9px;height:2px;background:#3a4a60;border:1px solid #6a7a90"></div>
<div class="a" style="left:377px;top:213px;width:9px;height:7px;border:1.5px solid #3a4a60"></div>
<div class="a" style="left:396px;top:209px;width:28px;height:15px;background:linear-gradient(#e8907a,#c84630 55%,#b83a28);border:1px solid #8a3a2a;border-radius:3px"></div>
<svg class="a" style="left:405.5px;top:212.0px" width="9.0" height="9.0" viewBox="-4.5 -4.5 9.0 9.0"><path d="M-3.15 -3.15 L3.15 3.15 M3.15 -3.15 L-3.15 3.15" stroke="#fff" stroke-width="2"/></svg>
<div class="a" style="left:103px;top:227px;width:322px;height:17px;background:#fbe8a6;border-bottom:1px solid #d5c282"></div>
<div class="t" style="transform:scaleX(0.925);left:221px;top:229.3px;font-size:10px;line-height:12px;color:#333;font-weight:normal;">Chromatic Fields Set</div>
<div class="a" style="left:103px;top:244px;width:322px;height:301px;background:#f0f0f0"></div>
<div class="a" style="left:166px;top:257px;width:246px;height:225px;background:radial-gradient(circle at 120.5px 107px,#3af01e 0,#34e01a 8px,#2cc016 16px,#209010 24px,#146008 30px,#0a3806 35px,#031403 40px,#010601 44px,#082406 50px,#0e360b 58px,#0b2e09 64px,#041004 72px,#030a03 78px,#071c07 86px,#082008 94px,#030e03 102px,#020802 108px,#041204 116px,#041204 126px,#020602 136px,#020802 150px,#010301 175px)"></div>
<div class="a" style="left:160px;top:482px;width:252px;height:1px;background:#111"></div>
<div class="a" style="left:165px;top:257px;width:1px;height:226px;background:#111"></div>
<div class="a" style="left:160px;top:256px;width:6px;height:2px;background:#111"></div>
<div class="a" style="left:203px;top:482px;width:1px;height:4px;background:#222"></div>
<div class="a" style="left:244px;top:482px;width:1px;height:4px;background:#222"></div>
<div class="a" style="left:286px;top:482px;width:1px;height:4px;background:#222"></div>
<div class="a" style="left:327px;top:482px;width:1px;height:4px;background:#222"></div>
<div class="a" style="left:369px;top:482px;width:1px;height:4px;background:#222"></div>
<div class="a" style="left:166px;top:482px;width:1.5px;height:5px;background:#111"></div>
<div class="a" style="left:411px;top:482px;width:1.5px;height:5px;background:#111"></div>
<div class="a" style="left:161px;top:283px;width:4px;height:1px;background:#222"></div>
<div class="a" style="left:161px;top:322px;width:4px;height:1px;background:#222"></div>
<div class="a" style="left:161px;top:364px;width:4px;height:1px;background:#222"></div>
<div class="a" style="left:161px;top:405px;width:4px;height:1px;background:#222"></div>
<div class="a" style="left:161px;top:449px;width:4px;height:1px;background:#222"></div>
<div class="t rot" style="left:152px;top:283px;font-size:10px;line-height:12px;color:#333;">0.1</div>
<div class="t rot" style="left:152px;top:322px;font-size:10px;line-height:12px;color:#333;">0.05</div>
<div class="t rot" style="left:152px;top:364px;font-size:10px;line-height:12px;color:#333;">0</div>
<div class="t rot" style="left:152px;top:405px;font-size:10px;line-height:12px;color:#333;">-0.05</div>
<div class="t rot" style="left:152px;top:449px;font-size:10px;line-height:12px;color:#333;">-0.1</div>
<div class="t rot" style="transform:translate(-50%,-50%) rotate(-90deg) scaleX(1.032);left:133px;top:372px;font-size:10px;line-height:12px;color:#333;">Y [mm]</div>
<div class="t" style="left:173px;top:492.5px;width:60px;text-align:center;font-size:10px;line-height:12px;color:#333">-0.1</div>
<div class="t" style="left:214px;top:492.5px;width:60px;text-align:center;font-size:10px;line-height:12px;color:#333">-0.05</div>
<div class="t" style="left:256px;top:492.5px;width:60px;text-align:center;font-size:10px;line-height:12px;color:#333">0</div>
<div class="t" style="left:297px;top:492.5px;width:60px;text-align:center;font-size:10px;line-height:12px;color:#333">0.05</div>
<div class="t" style="left:339px;top:492.5px;width:60px;text-align:center;font-size:10px;line-height:12px;color:#333">0.1</div>
<div class="t" style="transform:scaleX(1.094);left:271px;top:511.3px;font-size:10px;line-height:12px;color:#333;font-weight:normal;">X [mm]</div>
<div class="a" style="left:109px;top:377px;width:12px;height:23px;background:#cdcdcd"></div>
<svg class="a" style="left:108px;top:252px" width="12" height="12" viewBox="-6 -6 12 12"><path d="M-3.5 1.75 L0 -1.75 L3.5 1.75" fill="none" stroke="#555" stroke-width="1.3"/></svg>
<svg class="a" style="left:108px;top:514px" width="12" height="12" viewBox="-6 -6 12 12"><path d="M-3.5 -1.75 L0 1.75 L3.5 -1.75" fill="none" stroke="#555" stroke-width="1.3"/></svg>
<div class="a" style="left:123px;top:528px;width:298px;height:13px;background:#ececec"></div>
<div class="a" style="left:259px;top:528px;width:25px;height:12px;background:#cdcdcd"></div>
<svg class="a" style="left:122.5px;top:529px" width="12" height="12" viewBox="-6 -6 12 12"><path d="M1.75 -3.5 L-1.75 0 L1.75 3.5" fill="none" stroke="#555" stroke-width="1.3"/></svg>
<svg class="a" style="left:407px;top:529px" width="12" height="12" viewBox="-6 -6 12 12"><path d="M-1.75 -3.5 L1.75 0 L-1.75 3.5" fill="none" stroke="#555" stroke-width="1.3"/></svg>
<div class="a" style="left:474px;top:197px;width:337px;height:353px;background:#e0e8f1;border:1px solid #9aa8ba;border-radius:6px 6px 0 0"></div>
<div class="a" style="left:483px;top:207px;width:12px;height:11px;background:radial-gradient(circle,#60d040 0,#207010 25%,#061806 60%);border:1px solid #111"></div>
<div class="t" style="transform:scaleX(0.991);left:499px;top:206.0px;font-size:11px;line-height:13px;color:#b3bcc8;font-weight:normal;">9: "Raw Data Detector" (# 601) after "Ideal...</div>
<div class="a" style="left:717px;top:205px;width:27px;height:15px;background:linear-gradient(#eef2f6,#d6dee8);border:1px solid #9eaabb;border-radius:3px"></div>
<div class="a" style="left:746px;top:205px;width:27px;height:15px;background:linear-gradient(#eef2f6,#d6dee8);border:1px solid #9eaabb;border-radius:3px"></div>
<div class="a" style="left:775px;top:205px;width:27px;height:15px;background:linear-gradient(#eef2f6,#d6dee8);border:1px solid #9eaabb;border-radius:3px"></div>
<div class="a" style="left:726px;top:212px;width:9px;height:2px;border:1px solid #7a8494"></div>
<div class="a" style="left:755px;top:210px;width:9px;height:6px;border:1px solid #7a8494"></div>
<svg class="a" style="left:783px;top:207.5px" width="10" height="10" viewBox="-5 -5 10 10"><path d="M-3.5 -3.5 L3.5 3.5 M3.5 -3.5 L-3.5 3.5" stroke="#7f8898" stroke-width="1.3"/></svg>
<div class="a" style="left:482px;top:224px;width:53px;height:16px;background:#e9edf2"></div>
<div class="t" style="transform:scaleX(0.978);left:487px;top:226.5px;font-size:10px;line-height:12px;color:#333;font-weight:normal;">Light View</div>
<div class="a" style="left:537px;top:223px;width:55px;height:17px;background:#fcfcfc"></div>
<div class="t" style="transform:scaleX(1.000);left:542px;top:225.0px;font-size:10px;line-height:12px;color:#333;font-weight:normal;">Data View</div>
<div class="a" style="left:483px;top:240px;width:319px;height:287px;background:#f3f3f3"></div>
<div class="a" style="left:487px;top:244px;width:297px;height:262px;background:#fff"></div>
<div class="a" style="left:784px;top:244px;width:15px;height:262px;background:#f0f0f0"></div>
<div class="a" style="left:785px;top:368px;width:11px;height:16px;background:#d0d0d0"></div>
<svg class="a" style="left:783px;top:246px" width="12" height="12" viewBox="-6 -6 12 12"><path d="M-3.5 1.75 L0 -1.75 L3.5 1.75" fill="none" stroke="#555" stroke-width="1.3"/></svg>
<svg class="a" style="left:783px;top:492px" width="12" height="12" viewBox="-6 -6 12 12"><path d="M-3.5 -1.75 L0 1.75 L3.5 -1.75" fill="none" stroke="#555" stroke-width="1.3"/></svg>
<div class="a" style="left:487px;top:506px;width:312px;height:14px;background:#eeeeee"></div>
<div class="a" style="left:634px;top:506px;width:14px;height:13px;background:#d2d2d2"></div>
<svg class="a" style="left:487.5px;top:506.5px" width="12" height="12" viewBox="-6 -6 12 12"><path d="M1.75 -3.5 L-1.75 0 L1.75 3.5" fill="none" stroke="#555" stroke-width="1.3"/></svg>
<svg class="a" style="left:783.5px;top:506.5px" width="12" height="12" viewBox="-6 -6 12 12"><path d="M-1.75 -3.5 L1.75 0 L-1.75 3.5" fill="none" stroke="#555" stroke-width="1.3"/></svg>
<div class="a" style="left:512px;top:257px;width:198px;height:224px;background:radial-gradient(circle at 104.5px 96.5px,#fff8dc 0,#fdf0c0 5px,#f9d490 10px,#f4b058 15px,#e88c30 19.5px,#d87020 23.5px,#a85018 26.5px,#4a2222 29.5px,#160c34 32.5px,#0f0a38 36px,#1e1232 40px,#402230 46px,#4a282e 52px,#3a1e30 58px,#130c38 65px,#100a38 69px,#241532 76px,#2c1932 83px,#1a1036 91px,#0f0a38 97px,#1c1234 105px,#1a1034 115px,#0e0a38 128px)"></div>
<div class="a" style="left:511px;top:257px;width:1.5px;height:226px;background:#111"></div>
<div class="a" style="left:506px;top:257px;width:6px;height:2px;background:#111"></div>
<div class="a" style="left:506px;top:481px;width:205px;height:1.5px;background:#111"></div>
<div class="a" style="left:710px;top:481px;width:1.5px;height:5px;background:#111"></div>
<div class="a" style="left:511px;top:481px;width:1.5px;height:5px;background:#111"></div>
<div class="a" style="left:723px;top:270px;width:13px;height:211px;background:linear-gradient(#fffbe2,#fbe0a8 18%,#eea050 40%,#c06418 58%,#6a3018 76%,#2a1228 88%,#0d0a38 100%);border:1px solid #777"></div>
<div class="t rot" style="transform:translate(-50%,-50%) rotate(-90deg) scaleX(1.149);left:500px;top:285px;font-size:10px;line-height:12px;color:#333;">122.07 μm</div>
<div class="t rot" style="transform:translate(-50%,-50%) rotate(-90deg) scaleX(1.176);left:500px;top:451px;font-size:10px;line-height:12px;color:#333;">-159.06 μm</div>
<div class="t" style="transform:scaleX(1.078);left:514px;top:487.5px;font-size:10px;line-height:12px;color:#333;font-weight:normal;">-130.32 μm</div>
<div class="t" style="transform:scaleX(1.085);left:662.5px;top:487.5px;font-size:10px;line-height:12px;color:#333;font-weight:normal;">119.1 μm</div>
<div class="t" style="transform:scaleX(1.080);left:742px;top:269.3px;font-size:10px;line-height:12px;color:#333;font-weight:normal;">28.39</div>
<div class="t" style="transform:scaleX(1.065);left:742px;top:370.0px;font-size:10px;line-height:12px;color:#333;font-weight:normal;">14.195</div>
<div class="t" style="left:742px;top:469.0px;font-size:10px;line-height:12px;color:#333;font-weight:normal;">0</div>
<div class="a" style="left:483px;top:527px;width:319px;height:18px;background:#f0f0f0;border-top:1px solid #dcdcdc"></div>
<div class="t" style="transform:scaleX(0.957);left:482.5px;top:529.5px;font-size:10px;line-height:12px;color:#333;font-weight:normal;">Locally Polarized Harmonic Fie&nbsp;Amplitude</div>
<div class="a" style="left:664px;top:529px;width:1px;height:15px;background:#d6d6d6"></div>
<div class="t" style="transform:scaleX(0.919);left:670px;top:529.5px;font-size:10px;line-height:12px;color:#333;font-weight:normal;">Zoom: 5.5685</div>
<div class="a" style="left:735px;top:529px;width:1px;height:15px;background:#d6d6d6"></div>
<div class="t" style="transform:scaleX(0.880);left:742.5px;top:529.5px;font-size:10px;line-height:12px;color:#333;font-weight:normal;">(512; 512)</div>
<div class="a" style="left:0px;top:620px;width:1076px;height:1.5px;background:#eadede"></div>
<div class="a" style="left:0px;top:621.5px;width:1076px;height:12px;background:linear-gradient(#872830,#8e2c33 50%,#9c3a42)"></div>
<div class="a" style="left:0px;top:626px;width:1076px;height:1px;background:#7a2228"></div>
<div class="a" style="left:0px;top:614px;width:26px;height:20px;background:rgba(110,110,110,0.55)"></div>
<div class="a" style="left:8px;top:622px;width:10px;height:1px;background:#bbb"></div>
<div class="a" style="left:8px;top:625px;width:10px;height:1px;background:#bbb"></div>
<div class="a" style="left:0px;top:633.5px;width:1076px;height:21px;background:#f5f3f3"></div>
<div class="a" style="left:0px;top:634px;width:79px;height:20px;background:#ededed"></div>
<svg class="a" style="left:7px;top:636px" width="16" height="15" viewBox="0 0 16 15"><path d="M8 1 L15 14 H1 Z" fill="#f0c030" stroke="#a07818" stroke-width="1"/><path d="M8 5 V10" stroke="#333" stroke-width="1.6"/><circle cx="8" cy="12" r="0.9" fill="#333"/></svg>
<div class="t" style="transform:scaleX(0.913);left:29px;top:638.3px;font-size:10px;line-height:12px;color:#555;font-weight:normal;">Messages</div>
<div class="a" style="left:79px;top:633.5px;width:81px;height:21px;background:#a5333a"></div>
<div class="t" style="transform:scaleX(0.946);left:85px;top:638.3px;font-size:10px;line-height:12px;color:#fbe4e4;font-weight:normal;">Detector Results</div>
<div class="a" style="left:0px;top:654.5px;width:1076px;height:20px;background:#9f3540"></div>
<div class="a" style="left:0px;top:673.5px;width:1076px;height:1.5px;background:#7e2328"></div>
<div class="t" style="transform:scaleX(0.938);left:3px;top:658.5px;font-size:10px;line-height:12px;color:#f6e2e2;font-weight:normal;">Number of Used Cores (also for Parameter Run): 1</div>
<div class="t" style="transform:scaleX(0.875);left:238px;top:659.0px;font-size:10px;line-height:12px;color:#f6e2e2;font-weight:normal;">CPU Usage:</div>
<div class="t" style="left:295px;top:659.0px;font-size:10px;line-height:12px;color:#f6e2e2;font-weight:normal;">0</div>
<div class="a" style="left:303px;top:660px;width:288px;height:9.5px;background:#8e8e8e;border:1px solid #e8c8c8"></div>
<div class="a" style="left:304.5px;top:661.5px;width:12px;height:6.5px;background:#10108a"></div>
<div class="t" style="transform:scaleX(0.846);left:595.5px;top:659.5px;font-size:10px;line-height:12px;color:#f6e2e2;font-weight:normal;">100%</div>
<div class="t" style="transform:scaleX(0.918);left:639.5px;top:659.5px;font-size:10px;line-height:12px;color:#f6e2e2;font-weight:normal;">Physical Memory:</div>
<div class="t" style="left:720px;top:659.5px;font-size:10px;line-height:12px;color:#f6e2e2;font-weight:normal;">0</div>
<div class="a" style="left:727px;top:660px;width:288px;height:9.5px;background:#8e8e8e;border:1px solid #e8c8c8"></div>
<div class="a" style="left:728.5px;top:661.5px;width:143.5px;height:6.5px;background:#0c0c0c"></div>
<div class="a" style="left:872px;top:661.5px;width:12px;height:6.5px;background:#2a9a2a"></div>
<div class="t" style="transform:scaleX(0.870);left:1018px;top:659.5px;font-size:10px;line-height:12px;color:#d8a8a8;font-weight:normal;">8 GB</div>
<div class="a" style="left:0px;top:675px;width:1076px;height:47px;background:#343434"></div>
<div class="a" style="left:0px;top:705px;width:184px;height:17px;background:#353535"></div>
<div class="a" style="left:0px;top:705px;width:19px;height:17px;background:#d98a3a"></div>
<div class="a" style="left:6px;top:708px;width:7px;height:6px;background:#f4d4b0;border-radius:50%"></div>
<div class="a" style="left:4px;top:714px;width:11px;height:5px;background:#f4d4b0;border-radius:5px 5px 0 0"></div>
<div class="a" style="left:22px;top:708px;width:10px;height:8px;background:#ddd;border-radius:1px"></div>
<div class="a" style="left:25px;top:716px;width:4px;height:2px;background:#ddd"></div>
<div class="a" style="left:36px;top:707px;width:3.5px;height:7px;background:#ddd;border-radius:2px"></div>
<div class="a" style="left:34.5px;top:711px;width:6.5px;height:4px;border:1px solid #ddd;border-top:none;border-radius:0 0 4px 4px"></div>
<div class="a" style="left:37.2px;top:715px;width:1px;height:3px;background:#ddd"></div>
<svg class="a" style="left:43px;top:708.5px" width="98" height="10" viewBox="0 0 98 10"><path d="M3.6 0.8H8.6M0.8 9.2H8.6M3.1 0.3V7.0M6.3 3.0V7.0M8.4 0.3V7.0M14.3 0.8H20.8M14.3 5.0H20.8M14.3 9.2H18.0M13.8 0.3V9.7M16.8 3.0V9.7M23.7 0.8H31.5M23.7 5.0H31.5M25.1 9.2H31.5M26.7 0.3V9.7M33.1 0.8H39.6M35.9 5.0H40.9M35.9 9.2H42.3M35.8 3.0V9.7M38.3 3.0V9.7M35.0 9.0L37.7 5.5M46.7 0.8H51.7M45.3 9.2H53.1M49.5 0.3V9.7M45.7 9.0L48.5 5.5M54.7 0.8H63.9M56.1 5.0H63.9M57.4 9.2H62.5M56.3 3.0V7.0M59.3 0.3V9.7M61.1 3.0V9.7M56.5 9.0L59.3 5.5M66.8 0.8H74.6M65.5 9.2H73.3M70.3 0.3V9.7M67.3 9.0L70.1 5.5M79.0 0.8H85.4M77.6 9.2H82.7M79.5 0.3V7.0M82.8 0.3V9.7M78.1 9.0L80.8 5.5M87.0 0.8H94.8M88.4 5.0H96.2M88.4 9.2H93.4M89.6 0.3V9.7M92.2 0.3V7.0" fill="none" stroke="rgba(235,235,235,0.85)" stroke-width="1.0"/></svg>
<svg class="a" style="left:141px;top:708.5px" width="43" height="10" viewBox="0 0 43 10"><path d="M3.5 0.8H9.7M3.5 5.0H9.7M3.5 9.2H7.0M4.0 0.3V7.0M4.7 0.3V9.7M6.9 3.0V7.0M12.6 0.8H20.2M11.3 3.6H20.2M11.3 6.4H18.9M14.0 9.2H20.2M14.9 0.3V7.0M21.8 0.8H29.4M21.8 5.0H28.0M21.8 9.2H30.7M24.7 0.3V9.7M28.7 3.0V9.7M23.6 9.0L26.2 5.5M32.3 0.8H39.9M32.3 5.0H41.2M33.6 9.2H38.5M36.7 3.0V7.0M34.1 9.0L36.8 5.5" fill="none" stroke="rgba(50,120,230,0.95)" stroke-width="1.0"/></svg>
<div class="a" style="left:910px;top:704px;width:145px;height:18px;background:rgba(232,235,240,0.95);border-radius:2px"></div>
<svg class="a" style="left:912px;top:706px" width="140" height="14" viewBox="0 0 140 14"><rect x="1" y="0.5" width="13" height="13" rx="2" fill="#e0642e"/><path d="M4 4 H11 M4.5 7 C6 6 9 6 10.5 7.5 M5 11 L10 6.5 M8 11.5 L11 9" stroke="#fff" stroke-width="1.1" fill="none"/><g stroke="#6f8fb8" stroke-width="1.3" fill="none"><rect x="19.5" y="4" width="9" height="5"/><path d="M24 1.5 V12.5"/><path d="M41 2 C37 4 37 10 42 12 C38 12 34 9 35 6" stroke-width="2"/><circle cx="51" cy="3.5" r="1.2"/><path d="M55 8 C56 9 56 11 54 12.5" stroke-width="1.8"/><rect x="64.5" y="3.5" width="11" height="8"/><path d="M66 6 H74 M66 8.5 H74 M68 4 V11 M71 4 V11" stroke-width="0.8"/></g><path d="M84 3 L82 11 M84 3 L86.5 11" stroke="#c8ccd4" stroke-width="1.2"/><g stroke="#6f8fb8" stroke-width="1.2" fill="none"><path d="M96 1.5 L94.5 4 M101 1.5 L99.5 4 M95 5.5 V12.5 M95 5.5 H104 V12.5 M97 7.5 H102 M97 9.5 H102 M99.5 7.5 V12"/></g><path d="M110 3 L113 1.5 H117 L120 3 L121.5 6 L119 6.5 V12.5 H111 V6.5 L108.5 6 Z" fill="#7090ba"/><circle cx="131" cy="7" r="3.6" fill="none" stroke="#7f9cc2" stroke-width="2.4"/></svg>
<div class="a" style="left:0px;top:722px;width:1333px;height:28px;background:linear-gradient(90deg,#e4e8b4 0%,#e6e9ac 20%,#e9eba2 45%,#ecec9e 60%,#e6e9b2 80%,#dfe6c0 100%)"></div>
<svg class="a" style="left:10px;top:730px" width="14" height="14" viewBox="0 0 14 14"><path d="M1 2.2 L6 1.5 V6.4 H1 Z M7 1.3 L13 0.5 V6.4 H7 Z M1 7.4 H6 V12.4 L1 11.7 Z M7 7.4 H13 V13.4 L7 12.6 Z" fill="#2e2e2a"/></svg>
<svg class="a" style="left:43px;top:729px" width="15" height="15" viewBox="0 0 15 15"><circle cx="9.5" cy="5.5" r="4.3" fill="none" stroke="#3a3a36" stroke-width="1.2"/><path d="M6.4 8.6 L1.2 13.8" stroke="#3a3a36" stroke-width="1.4"/></svg>
<svg class="a" style="left:77px;top:728px" width="16" height="16" viewBox="0 0 16 16"><g fill="#262622"><path d="M8 8 C3 8 1 6 1 4 C1 1.5 3 0.5 5 1 C7.5 1.5 8 4 8 8 Z"/><path d="M8 8 C8 3 10 1 12 1 C14.5 1 15.5 3 15 5 C14.5 7.5 12 8 8 8 Z"/><path d="M8 8 C13 8 15 10 15 12 C15 14.5 13 15.5 11 15 C8.5 14.5 8 12 8 8 Z"/><path d="M8 8 C8 13 6 15 4 15 C1.5 15 0.5 13 1 11 C1.5 8.5 4 8 8 8 Z"/></g></svg>
<svg class="a" style="left:113px;top:729px" width="18" height="15" viewBox="0 0 18 15"><path d="M2 1.5 H8 L9.5 3 H16 V6 H2 Z" fill="#f0c848"/><path d="M2 6 H16 V13.5 H12.5 V9 H10.5 V13.5 H7.5 V9 H5.5 V13.5 H2 Z" fill="#3f95c8"/></svg>
<svg class="a" style="left:149px;top:727px" width="17" height="17" viewBox="0 0 17 17"><circle cx="8.5" cy="8.8" r="6.2" fill="#58b838"/><path d="M4.5 8 H12.5 C12.3 5.5 10.5 4.3 8.5 4.3 C6.3 4.3 4.6 6 4.5 8 Z" fill="#d8f0c0"/><path d="M4.6 10 C5.3 12 7 13.2 9 13.1 C10.6 13 11.8 12.2 12.4 11" fill="none" stroke="#d8f0c0" stroke-width="1.3"/><path d="M2 15 C0 12 6 4 15 1.5" fill="none" stroke="#78c848" stroke-width="1.4"/></svg>
<div class="a" style="left:143px;top:748px;width:27px;height:1.5px;background:#98b8d0"></div>
<div class="a" style="left:174px;top:722px;width:34px;height:28px;background:#eef1dc"></div>
<svg class="a" style="left:182px;top:727px" width="18" height="18" viewBox="0 0 18 18"><rect x="0.5" y="0.5" width="17" height="17" rx="1.5" fill="#3f7ed6"/><rect x="3" y="3.5" width="12" height="10.5" fill="#f4f8ff"/><path d="M5 11 L7 7 L9 10 L11 7 L13 11" fill="none" stroke="#3f7ed6" stroke-width="1.4"/></svg>
<div class="a" style="left:175px;top:748px;width:33px;height:1.5px;background:#98b8d0"></div>
<svg class="a" style="left:216px;top:728px" width="18" height="17" viewBox="0 0 18 17"><circle cx="9" cy="8.5" r="8" fill="#f6f2f2" stroke="#d8d0d0" stroke-width="0.8"/><path d="M3 8 C4 5 6 4 8 5 M3.5 10 H12" stroke="#c04050" stroke-width="1.2" fill="none"/><path d="M9 7 H15 M6 12 H12" stroke="#8a6a80" stroke-width="0.8"/></svg>
<div class="a" style="left:212px;top:748px;width:27px;height:1.5px;background:#98b8d0"></div>
<svg class="a" style="left:250px;top:728px" width="18" height="16" viewBox="0 0 18 16"><ellipse cx="6.5" cy="6" rx="6" ry="5" fill="#3aae38"/><ellipse cx="12" cy="10.5" rx="5.3" ry="4.5" fill="#e8ece8" stroke="#c8d0c8" stroke-width="0.6"/><circle cx="10.3" cy="10" r="0.7" fill="#8a9"/><circle cx="13.6" cy="10" r="0.7" fill="#8a9"/></svg>
<div class="a" style="left:246px;top:748px;width:27px;height:1.5px;background:#98b8d0"></div>
<svg class="a" style="left:284px;top:728px" width="18" height="16" viewBox="0 0 18 16"><path d="M3 11 C0 8 1.5 2.5 7 1.5 C12 0.8 15 4 14.5 7.5" fill="none" stroke="#2a8ac8" stroke-width="2.2"/><path d="M4 11.5 L9 14 L15 9" fill="none" stroke="#38b0a8" stroke-width="2.2"/><path d="M15 9 L13 13.5 L9 14" fill="none" stroke="#f0b020" stroke-width="1.6"/></svg>
<div class="a" style="left:280px;top:748px;width:27px;height:1.5px;background:#98b8d0"></div>
<div class="a" style="left:1076px;top:0;width:257px;height:722px;background:#2b2b2b;overflow:hidden">
<div class="a" style="left:-10px;top:-10px;width:277px;height:742px;filter:blur(3.2px)">
<div class="a" style="left:0px;top:10px;width:267px;height:22px;background:#292929"></div>
<div class="a" style="left:0px;top:53px;width:267px;height:68px;background:#323232"></div>
<div class="a" style="left:12px;top:36px;width:46px;height:15px;background:#4a4a4a;border-radius:6px"></div>
<div class="a" style="left:54px;top:87px;width:84px;height:13px;background:#4e4e4e;border-radius:6px"></div>
<div class="a" style="left:182px;top:87px;width:28px;height:12px;background:#444;border-radius:6px"></div>
<div class="a" style="left:76px;top:132px;width:96px;height:13px;background:#424242;border-radius:6px"></div>
<div class="a" style="left:103px;top:146px;width:45px;height:14px;background:rgba(40,90,170,0.35);border-radius:6px"></div>
<div class="a" style="left:226px;top:122px;width:30px;height:16px;background:rgba(90,80,75,0.12);border-radius:4px"></div>
<div class="a" style="left:226px;top:152px;width:30px;height:16px;background:rgba(90,80,75,0.12);border-radius:4px"></div>
<div class="a" style="left:84px;top:185px;width:46px;height:13px;background:rgba(40,90,180,0.3);border-radius:5px"></div>
<div class="a" style="left:226px;top:183px;width:30px;height:16px;background:rgba(90,80,75,0.12);border-radius:4px"></div>
<div class="a" style="left:84px;top:216px;width:46px;height:13px;background:rgba(40,90,180,0.3);border-radius:5px"></div>
<div class="a" style="left:226px;top:214px;width:30px;height:16px;background:rgba(90,80,75,0.12);border-radius:4px"></div>
<div class="a" style="left:72px;top:246px;width:46px;height:13px;background:rgba(40,90,180,0.3);border-radius:5px"></div>
<div class="a" style="left:226px;top:244px;width:30px;height:16px;background:rgba(90,80,75,0.12);border-radius:4px"></div>
<div class="a" style="left:84px;top:277px;width:46px;height:13px;background:rgba(40,90,180,0.3);border-radius:5px"></div>
<div class="a" style="left:226px;top:275px;width:30px;height:16px;background:rgba(90,80,75,0.12);border-radius:4px"></div>
<div class="a" style="left:76px;top:307px;width:42px;height:13px;background:rgba(40,90,180,0.3);border-radius:5px"></div>
<div class="a" style="left:226px;top:305px;width:30px;height:16px;background:rgba(90,80,75,0.12);border-radius:4px"></div>
<div class="a" style="left:82px;top:338px;width:42px;height:13px;background:rgba(40,90,180,0.3);border-radius:5px"></div>
<div class="a" style="left:226px;top:336px;width:30px;height:16px;background:rgba(90,80,75,0.12);border-radius:4px"></div>
<div class="a" style="left:80px;top:368px;width:42px;height:13px;background:rgba(40,90,180,0.3);border-radius:5px"></div>
<div class="a" style="left:226px;top:366px;width:30px;height:16px;background:rgba(90,80,75,0.12);border-radius:4px"></div>
<div class="a" style="left:80px;top:399px;width:42px;height:13px;background:rgba(40,90,180,0.3);border-radius:5px"></div>
<div class="a" style="left:226px;top:397px;width:30px;height:16px;background:rgba(90,80,75,0.12);border-radius:4px"></div>
<div class="a" style="left:132px;top:429px;width:46px;height:13px;background:rgba(40,90,180,0.3);border-radius:5px"></div>
<div class="a" style="left:226px;top:427px;width:30px;height:16px;background:rgba(90,80,75,0.12);border-radius:4px"></div>
<div class="a" style="left:80px;top:460px;width:42px;height:13px;background:rgba(40,90,180,0.3);border-radius:5px"></div>
<div class="a" style="left:226px;top:458px;width:30px;height:16px;background:rgba(90,80,75,0.12);border-radius:4px"></div>
<div class="a" style="left:80px;top:491px;width:42px;height:13px;background:rgba(40,90,180,0.3);border-radius:5px"></div>
<div class="a" style="left:226px;top:489px;width:30px;height:16px;background:rgba(90,80,75,0.12);border-radius:4px"></div>
<div class="a" style="left:80px;top:521px;width:42px;height:13px;background:rgba(40,90,180,0.3);border-radius:5px"></div>
<div class="a" style="left:226px;top:519px;width:30px;height:16px;background:rgba(90,80,75,0.12);border-radius:4px"></div>
<div class="a" style="left:76px;top:551px;width:42px;height:13px;background:rgba(40,90,180,0.3);border-radius:5px"></div>
<div class="a" style="left:226px;top:549px;width:30px;height:16px;background:rgba(90,80,75,0.12);border-radius:4px"></div>
<div class="a" style="left:76px;top:582px;width:42px;height:13px;background:rgba(40,90,180,0.3);border-radius:5px"></div>
<div class="a" style="left:226px;top:580px;width:30px;height:16px;background:rgba(90,80,75,0.12);border-radius:4px"></div>
<div class="a" style="left:80px;top:612px;width:42px;height:13px;background:rgba(40,90,180,0.3);border-radius:5px"></div>
<div class="a" style="left:226px;top:610px;width:30px;height:16px;background:rgba(90,80,75,0.12);border-radius:4px"></div>
<div class="a" style="left:74px;top:643px;width:42px;height:13px;background:rgba(40,90,180,0.3);border-radius:5px"></div>
<div class="a" style="left:226px;top:641px;width:30px;height:16px;background:rgba(90,80,75,0.12);border-radius:4px"></div>
<div class="a" style="left:104px;top:673px;width:46px;height:13px;background:rgba(40,90,180,0.3);border-radius:5px"></div>
<div class="a" style="left:226px;top:671px;width:30px;height:16px;background:rgba(90,80,75,0.12);border-radius:4px"></div>
<div class="a" style="left:218px;top:110px;width:49px;height:590px;background:rgba(70,70,70,0.18)"></div>
<div class="a" style="left:212px;top:667px;width:52px;height:22px;background:rgba(60,120,210,0.6);border-radius:8px"></div>
<div class="a" style="left:0px;top:690px;width:267px;height:40px;background:linear-gradient(rgba(36,36,36,0),rgba(40,40,40,0.5))"></div>
</div>
<div class="a" style="left:0;top:0;width:257px;height:722px;filter:blur(1.3px)">
<div class="a" style="left:12px;top:109px;width:22px;height:22px;background:linear-gradient(135deg,#7a8a6c,#98a890);border-radius:2px;opacity:0.8"></div>
<div class="a" style="left:16px;top:114px;width:12px;height:10px;background:radial-gradient(circle,rgba(255,255,255,0.18),rgba(255,255,255,0) 70%)"></div>
<div class="a" style="left:12px;top:139px;width:22px;height:22px;background:linear-gradient(135deg,#2a64c8,#2f6ad0);border-radius:2px;opacity:0.8"></div>
<div class="a" style="left:16px;top:144px;width:12px;height:10px;background:radial-gradient(circle,rgba(255,255,255,0.18),rgba(255,255,255,0) 70%)"></div>
<div class="a" style="left:12px;top:170px;width:22px;height:22px;background:linear-gradient(135deg,#a05a50,#c89080);border-radius:2px;opacity:0.8"></div>
<div class="a" style="left:16px;top:175px;width:12px;height:10px;background:radial-gradient(circle,rgba(255,255,255,0.18),rgba(255,255,255,0) 70%)"></div>
<div class="a" style="left:12px;top:201px;width:22px;height:22px;background:linear-gradient(135deg,#909090,#686868);border-radius:2px;opacity:0.8"></div>
<div class="a" style="left:16px;top:206px;width:12px;height:10px;background:radial-gradient(circle,rgba(255,255,255,0.18),rgba(255,255,255,0) 70%)"></div>
<div class="a" style="left:12px;top:231px;width:22px;height:22px;background:linear-gradient(135deg,#b09878,#d8c8b8);border-radius:2px;opacity:0.8"></div>
<div class="a" style="left:16px;top:236px;width:12px;height:10px;background:radial-gradient(circle,rgba(255,255,255,0.18),rgba(255,255,255,0) 70%)"></div>
<div class="a" style="left:12px;top:262px;width:22px;height:22px;background:linear-gradient(135deg,#d0c048,#b8a838);border-radius:2px;opacity:0.8"></div>
<div class="a" style="left:16px;top:267px;width:12px;height:10px;background:radial-gradient(circle,rgba(255,255,255,0.18),rgba(255,255,255,0) 70%)"></div>
<div class="a" style="left:12px;top:292px;width:22px;height:22px;background:linear-gradient(135deg,#2a64c8,#2f6ad0);border-radius:2px;opacity:0.8"></div>
<div class="a" style="left:16px;top:297px;width:12px;height:10px;background:radial-gradient(circle,rgba(255,255,255,0.18),rgba(255,255,255,0) 70%)"></div>
<div class="a" style="left:12px;top:323px;width:22px;height:22px;background:linear-gradient(135deg,#2a64c8,#2f6ad0);border-radius:2px;opacity:0.8"></div>
<div class="a" style="left:16px;top:328px;width:12px;height:10px;background:radial-gradient(circle,rgba(255,255,255,0.18),rgba(255,255,255,0) 70%)"></div>
<div class="a" style="left:12px;top:353px;width:22px;height:22px;background:linear-gradient(135deg,#c09070,#d8b898);border-radius:2px;opacity:0.8"></div>
<div class="a" style="left:16px;top:358px;width:12px;height:10px;background:radial-gradient(circle,rgba(255,255,255,0.18),rgba(255,255,255,0) 70%)"></div>
<div class="a" style="left:12px;top:384px;width:22px;height:22px;background:linear-gradient(135deg,#70809a,#a08878);border-radius:2px;opacity:0.8"></div>
<div class="a" style="left:16px;top:389px;width:12px;height:10px;background:radial-gradient(circle,rgba(255,255,255,0.18),rgba(255,255,255,0) 70%)"></div>
<div class="a" style="left:12px;top:414px;width:22px;height:22px;background:linear-gradient(135deg,#b87850,#d8a880);border-radius:2px;opacity:0.8"></div>
<div class="a" style="left:16px;top:419px;width:12px;height:10px;background:radial-gradient(circle,rgba(255,255,255,0.18),rgba(255,255,255,0) 70%)"></div>
<div class="a" style="left:12px;top:445px;width:22px;height:22px;background:linear-gradient(135deg,#c0a898,#d8c8c0);border-radius:2px;opacity:0.8"></div>
<div class="a" style="left:16px;top:450px;width:12px;height:10px;background:radial-gradient(circle,rgba(255,255,255,0.18),rgba(255,255,255,0) 70%)"></div>
<div class="a" style="left:12px;top:476px;width:22px;height:22px;background:linear-gradient(135deg,#c8a0a0,#d8c0c0);border-radius:2px;opacity:0.8"></div>
<div class="a" style="left:16px;top:481px;width:12px;height:10px;background:radial-gradient(circle,rgba(255,255,255,0.18),rgba(255,255,255,0) 70%)"></div>
<div class="a" style="left:12px;top:506px;width:22px;height:22px;background:linear-gradient(135deg,#a0a09a,#c0c0b8);border-radius:2px;opacity:0.8"></div>
<div class="a" style="left:16px;top:511px;width:12px;height:10px;background:radial-gradient(circle,rgba(255,255,255,0.18),rgba(255,255,255,0) 70%)"></div>
<div class="a" style="left:12px;top:536px;width:22px;height:22px;background:linear-gradient(135deg,#5a4030,#907060);border-radius:2px;opacity:0.8"></div>
<div class="a" style="left:16px;top:541px;width:12px;height:10px;background:radial-gradient(circle,rgba(255,255,255,0.18),rgba(255,255,255,0) 70%)"></div>
<div class="a" style="left:12px;top:567px;width:22px;height:22px;background:linear-gradient(135deg,#7a9870,#a8b898);border-radius:2px;opacity:0.8"></div>
<div class="a" style="left:16px;top:572px;width:12px;height:10px;background:radial-gradient(circle,rgba(255,255,255,0.18),rgba(255,255,255,0) 70%)"></div>
<div class="a" style="left:12px;top:597px;width:22px;height:22px;background:linear-gradient(135deg,#2a64c8,#2f6ad0);border-radius:2px;opacity:0.8"></div>
<div class="a" style="left:16px;top:602px;width:12px;height:10px;background:radial-gradient(circle,rgba(255,255,255,0.18),rgba(255,255,255,0) 70%)"></div>
<div class="a" style="left:12px;top:628px;width:22px;height:22px;background:linear-gradient(135deg,#78889a,#a0a8b0);border-radius:2px;opacity:0.8"></div>
<div class="a" style="left:16px;top:633px;width:12px;height:10px;background:radial-gradient(circle,rgba(255,255,255,0.18),rgba(255,255,255,0) 70%)"></div>
<div class="a" style="left:12px;top:658px;width:22px;height:22px;background:linear-gradient(135deg,#1c4060,#24507a);border-radius:2px;opacity:0.6"></div>
<div class="a" style="left:16px;top:663px;width:12px;height:10px;background:radial-gradient(circle,rgba(255,255,255,0.18),rgba(255,255,255,0) 70%)"></div>
</div>
</div>
<div class="a" style="left:1100px;top:100px;width:120px;height:600px;filter:blur(0.9px);overflow:visible"><div class="a" style="left:-1100px;top:-100px;width:1333px;height:750px">
<svg class="a" style="left:1117px;top:176.5px" width="31" height="9" viewBox="0 0 31 9"><path d="M0.8 0.8H7.9M0.8 8.2H9.2M3.1 0.3V8.7M4.6 2.7V8.7M6.3 2.7V8.7M12.1 0.8H16.7M10.8 3.3H17.9M10.8 5.7H19.2M13.3 8.2H19.2M15.7 2.7V6.3M20.8 0.8H29.2M20.8 4.5H29.2M22.1 8.2H29.2M23.6 2.7V8.7M25.3 2.7V6.3M27.5 0.3V8.7M22.5 8.1L25.0 5.0" fill="none" stroke="rgba(165,165,165,0.6)" stroke-width="1.0"/></svg>
<svg class="a" style="left:1117px;top:207.5px" width="31" height="9" viewBox="0 0 31 9"><path d="M0.8 0.8H9.2M3.3 8.2H7.9M5.7 0.3V6.3M13.3 0.8H16.7M13.3 4.5H19.2M13.3 8.2H17.9M15.2 2.7V8.7M12.5 8.1L15.0 5.0M22.1 0.8H27.9M22.1 4.5H29.2M20.8 8.2H26.7M25.0 2.7V8.7" fill="none" stroke="rgba(165,165,165,0.6)" stroke-width="1.0"/></svg>
<svg class="a" style="left:1117px;top:237.5px" width="19" height="9" viewBox="0 0 19 9"><path d="M1.9 0.8H7.1M3.0 3.3H6.0M3.0 5.7H8.2M0.8 8.2H7.1M5.4 0.3V8.7M2.3 8.1L4.5 5.0M10.9 0.8H15.0M9.8 3.3H17.2M9.8 5.7H17.2M9.8 8.2H16.1M11.5 2.7V6.3M14.3 0.3V6.3M11.3 8.1L13.5 5.0" fill="none" stroke="rgba(165,165,165,0.6)" stroke-width="1.0"/></svg>
<svg class="a" style="left:1117px;top:268.5px" width="31" height="9" viewBox="0 0 31 9"><path d="M3.3 0.8H6.7M0.8 3.3H9.2M0.8 5.7H6.7M3.3 8.2H6.7M4.1 0.3V8.7M6.2 0.3V8.7M2.5 8.1L5.0 5.0M13.3 0.8H19.2M10.8 4.5H19.2M12.1 8.2H17.9M12.7 0.3V6.3M15.6 0.3V8.7M20.8 0.8H29.2M22.1 4.5H29.2M20.8 8.2H27.9M22.9 0.3V8.7M25.6 0.3V8.7M27.7 2.7V8.7" fill="none" stroke="rgba(165,165,165,0.6)" stroke-width="1.0"/></svg>
<svg class="a" style="left:1117px;top:298.5px" width="23" height="9" viewBox="0 0 23 9"><path d="M0.8 0.8H10.2M3.6 4.5H7.4M0.8 8.2H8.8M2.2 2.7V8.7M4.8 0.3V8.7M7.4 0.3V6.3M14.6 0.8H21.2M13.2 4.5H18.4M14.6 8.2H21.2M15.2 0.3V8.7M18.1 0.3V6.3M13.7 8.1L16.5 5.0" fill="none" stroke="rgba(165,165,165,0.6)" stroke-width="1.0"/></svg>
<svg class="a" style="left:1117px;top:329.5px" width="29" height="9" viewBox="0 0 29 9"><path d="M3.1 0.8H6.2M0.8 4.5H8.5M0.8 8.2H8.5M3.1 0.3V8.7M5.4 0.3V6.3M2.3 8.1L4.7 5.0M12.5 0.8H15.5M12.5 8.2H17.9M11.6 0.3V8.7M13.6 0.3V8.7M16.3 2.7V6.3M19.5 0.8H26.0M19.5 4.5H24.9M21.8 8.2H24.9M22.3 0.3V8.7M22.4 2.7V8.7M26.2 0.3V8.7M21.0 8.1L23.3 5.0" fill="none" stroke="rgba(165,165,165,0.6)" stroke-width="1.0"/></svg>
<svg class="a" style="left:1117px;top:359.5px" width="27" height="9" viewBox="0 0 27 9"><path d="M2.9 0.8H7.9M0.8 3.3H7.9M0.8 5.7H7.9M0.8 8.2H5.7M4.4 0.3V8.7M9.5 0.8H15.5M9.5 4.5H15.5M11.6 8.2H16.5M12.1 2.7V6.3M10.9 8.1L13.0 5.0M18.1 0.8H25.2M18.1 4.5H24.1M20.3 8.2H24.1M20.8 0.3V8.7M22.9 2.7V8.7M19.5 8.1L21.7 5.0" fill="none" stroke="rgba(165,165,165,0.6)" stroke-width="1.0"/></svg>
<svg class="a" style="left:1117px;top:390.5px" width="27" height="9" viewBox="0 0 27 9"><path d="M1.9 0.8H7.9M0.8 3.3H7.9M2.9 5.7H5.7M0.8 8.2H6.8M3.5 0.3V8.7M5.5 2.7V8.7M11.6 0.8H16.5M9.5 4.5H15.5M9.5 8.2H16.5M12.2 0.3V8.7M12.5 0.3V8.7M15.3 0.3V8.7M18.1 0.8H25.2M20.3 3.3H23.1M18.1 5.7H25.2M20.3 8.2H25.2M19.5 2.7V8.7M22.7 2.7V8.7M19.5 8.1L21.7 5.0" fill="none" stroke="rgba(165,165,165,0.6)" stroke-width="1.0"/></svg>
<svg class="a" style="left:1117px;top:420.5px" width="61" height="9" viewBox="0 0 61 9"><path d="M2.1 0.8H9.2M0.8 3.3H9.2M2.1 5.7H9.2M0.8 8.2H6.7M4.6 2.7V8.7M13.3 0.8H19.2M10.8 4.5H19.2M10.8 8.2H17.9M14.7 0.3V6.3M23.3 0.8H27.9M22.1 4.5H26.7M20.8 8.2H29.2M22.3 2.7V8.7M24.4 0.3V6.3M27.9 0.3V6.3M22.5 8.1L25.0 5.0M30.8 0.8H36.7M30.8 3.3H36.7M30.8 5.7H39.2M32.1 8.2H39.2M35.8 0.3V8.7M32.5 8.1L35.0 5.0M42.1 0.8H47.9M42.1 8.2H47.9M45.4 2.7V6.3M50.8 0.8H59.2M50.8 8.2H56.7M53.8 0.3V8.7M55.8 0.3V8.7M58.0 0.3V8.7" fill="none" stroke="rgba(165,165,165,0.6)" stroke-width="1.0"/></svg>
<svg class="a" style="left:1117px;top:451.5px" width="27" height="9" viewBox="0 0 27 9"><path d="M0.8 0.8H7.9M1.9 4.5H6.8M2.9 8.2H6.8M4.4 0.3V8.7M2.2 8.1L4.3 5.0M9.5 0.8H14.4M10.5 8.2H16.5M12.0 0.3V8.7M13.2 0.3V8.7M14.6 2.7V8.7M10.9 8.1L13.0 5.0M20.3 0.8H23.1M18.1 4.5H25.2M19.2 8.2H24.1M20.6 0.3V8.7M23.3 0.3V8.7M19.5 8.1L21.7 5.0" fill="none" stroke="rgba(165,165,165,0.6)" stroke-width="1.0"/></svg>
<svg class="a" style="left:1117px;top:482.5px" width="27" height="9" viewBox="0 0 27 9"><path d="M0.8 0.8H7.9M1.9 4.5H7.9M1.9 8.2H7.9M2.1 0.3V6.3M4.4 2.7V8.7M6.4 0.3V8.7M2.2 8.1L4.3 5.0M11.6 0.8H15.5M9.5 4.5H15.5M9.5 8.2H16.5M12.4 2.7V8.7M18.1 0.8H23.1M19.2 4.5H25.2M18.1 8.2H24.1M19.6 0.3V8.7M21.9 0.3V8.7" fill="none" stroke="rgba(165,165,165,0.6)" stroke-width="1.0"/></svg>
<svg class="a" style="left:1117px;top:512.5px" width="27" height="9" viewBox="0 0 27 9"><path d="M0.8 0.8H6.8M2.9 4.5H6.8M0.8 8.2H6.8M3.7 0.3V6.3M2.2 8.1L4.3 5.0M9.5 0.8H14.4M9.5 3.3H16.5M9.5 5.7H14.4M10.5 8.2H14.4M12.2 0.3V8.7M13.8 2.7V8.7M10.9 8.1L13.0 5.0M19.2 0.8H25.2M20.3 8.2H23.1M21.4 0.3V8.7M22.7 0.3V8.7" fill="none" stroke="rgba(165,165,165,0.6)" stroke-width="1.0"/></svg>
<svg class="a" style="left:1117px;top:542.5px" width="23" height="9" viewBox="0 0 23 9"><path d="M3.6 0.8H10.2M0.8 4.5H10.2M0.8 8.2H10.2M2.3 2.7V8.7M6.0 0.3V8.7M7.5 0.3V6.3M2.7 8.1L5.5 5.0M11.8 0.8H18.4M14.6 8.2H21.2M14.2 0.3V8.7M17.7 2.7V6.3M13.7 8.1L16.5 5.0" fill="none" stroke="rgba(165,165,165,0.6)" stroke-width="1.0"/></svg>
<svg class="a" style="left:1117px;top:573.5px" width="23" height="9" viewBox="0 0 23 9"><path d="M0.8 0.8H7.4M0.8 4.5H7.4M0.8 8.2H10.2M5.3 2.7V8.7M2.7 8.1L5.5 5.0M11.8 0.8H21.2M11.8 8.2H21.2M16.8 0.3V8.7M13.7 8.1L16.5 5.0" fill="none" stroke="rgba(165,165,165,0.6)" stroke-width="1.0"/></svg>
<svg class="a" style="left:1117px;top:603.5px" width="27" height="9" viewBox="0 0 27 9"><path d="M1.9 0.8H5.7M1.9 3.3H7.9M2.9 5.7H5.7M1.9 8.2H5.7M1.9 0.3V6.3M5.3 0.3V8.7M6.0 2.7V8.7M11.6 0.8H16.5M9.5 3.3H16.5M10.5 5.7H14.4M10.5 8.2H16.5M11.2 2.7V8.7M12.1 0.3V8.7M15.6 0.3V6.3M20.3 0.8H25.2M18.1 8.2H25.2M21.1 0.3V8.7" fill="none" stroke="rgba(165,165,165,0.6)" stroke-width="1.0"/></svg>
<svg class="a" style="left:1117px;top:634.5px" width="21" height="9" viewBox="0 0 21 9"><path d="M0.8 0.8H9.2M2.1 4.5H7.9M0.8 8.2H7.9M4.4 0.3V8.7M5.9 0.3V8.7M12.1 0.8H17.9M10.8 4.5H19.2M10.8 8.2H16.7M13.9 0.3V6.3M16.1 0.3V8.7" fill="none" stroke="rgba(165,165,165,0.6)" stroke-width="1.0"/></svg>
<svg class="a" style="left:1117px;top:664.5px" width="51" height="9" viewBox="0 0 51 9"><path d="M0.8 0.8H9.2M2.1 4.5H6.7M0.8 8.2H7.9M3.4 0.3V8.7M4.8 0.3V6.3M6.4 0.3V8.7M2.5 8.1L5.0 5.0M10.8 0.8H17.9M12.1 4.5H17.9M12.1 8.2H19.2M14.4 0.3V6.3M22.1 0.8H29.2M20.8 3.3H26.7M20.8 5.7H29.2M20.8 8.2H29.2M25.1 0.3V8.7M33.3 0.8H37.9M30.8 4.5H39.2M32.1 8.2H36.7M32.9 0.3V6.3M35.7 0.3V8.7M43.3 0.8H47.9M40.8 4.5H49.2M42.1 8.2H46.7M42.4 0.3V8.7M44.1 0.3V8.7M46.5 0.3V8.7" fill="none" stroke="rgba(165,165,165,0.6)" stroke-width="1.0"/></svg>
</div></div>
<div class="a" style="left:1064px;top:64px;width:24px;height:612px;background:linear-gradient(90deg,rgba(220,220,220,0) 0px,rgba(210,210,210,0.35) 7px,rgba(150,150,150,0.9) 11px,rgba(110,110,110,1) 12px,rgba(70,70,70,0.9) 16px,rgba(43,43,43,0) 24px)"></div>
<div class="a" style="left:960px;top:56px;width:116px;height:13px;background:linear-gradient(rgba(110,110,110,0),rgba(110,110,110,0.55));-webkit-mask-image:linear-gradient(90deg,transparent,#000 60%)"></div>
<div class="a" style="left:1076px;top:676px;width:257px;height:36px;background:linear-gradient(rgba(36,36,36,0),rgba(38,38,38,0.35))"></div>
<div class="a" style="left:0px;top:675px;width:1076px;height:3px;background:rgba(40,30,30,0.5)"></div>
<div class="a" style="left:1076px;top:722px;width:257px;height:10px;background:linear-gradient(rgba(60,62,50,0.75),rgba(120,125,90,0.3) 50%,rgba(200,210,150,0))"></div>
<div class="a" style="left:1076px;top:712px;width:257px;height:10px;background:linear-gradient(rgba(43,43,43,0),rgba(60,62,50,0.6))"></div>
<div class="a" style="left:1076px;top:730px;width:257px;height:20px;background:linear-gradient(90deg,rgba(200,215,150,0.35),rgba(215,225,170,0.2) 50%,rgba(190,215,170,0.35))"></div>
</body></html>
